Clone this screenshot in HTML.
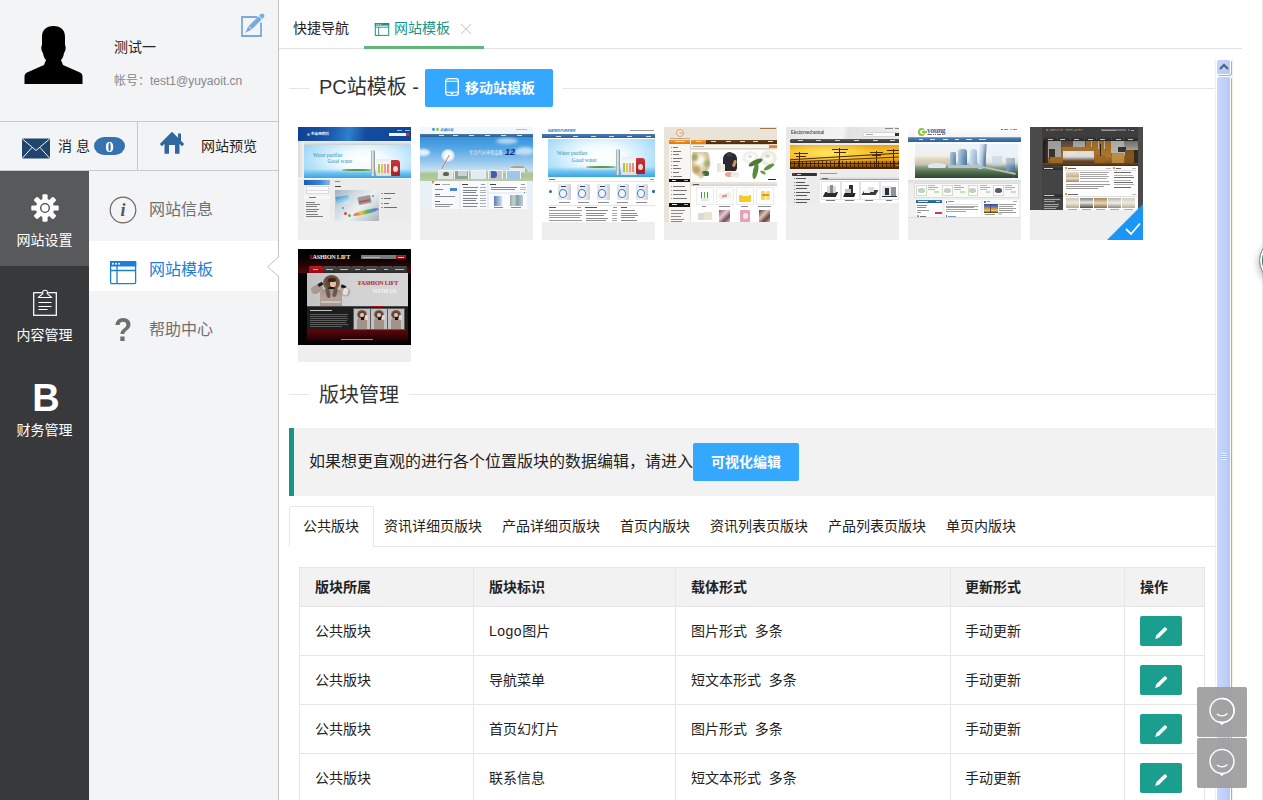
<!DOCTYPE html>
<html lang="zh-CN">
<head>
<meta charset="utf-8">
<title>网站模板</title>
<style>
*{box-sizing:border-box;margin:0;padding:0}
html,body{width:1263px;height:800px;overflow:hidden;background:#fff}
body{font-family:"Liberation Sans","Noto Sans CJK SC",sans-serif;font-size:14px;color:#333;position:relative}
.abs{position:absolute}
#side{position:absolute;left:0;top:0;width:278px;height:800px;background:#f3f4f6}
#sideborder{position:absolute;left:278px;top:0;width:1px;height:800px;background:#c3c3c3}
#dark{position:absolute;left:0;top:171px;width:89px;height:629px;background:#38393b}
#dark .act{position:absolute;left:0;top:0;width:89px;height:95px;background:#58595b}
.dl{position:absolute;left:0;width:89px;text-align:center;color:#fff;font-size:14px;line-height:20px}
.hl{position:absolute;background:#c9c9c9}
.t{position:absolute;white-space:nowrap;line-height:20px}
#main{position:absolute;left:279px;top:0;width:984px;height:800px;background:#fff;overflow:hidden}

.ln{position:absolute;height:1px;background:#e6e6e6}
.vl{position:absolute;width:1px;background:#e6e6e6}
.btn{position:absolute;background:#34a7ff;border-radius:2px;color:#fff;font-weight:bold;font-size:14px;line-height:38px;height:38px;white-space:nowrap}
.th{position:absolute;width:113px;height:113px;background:#eee;overflow:hidden}
.tab{position:absolute;top:506px;height:40px;line-height:40px;font-size:14px;color:#222;white-space:nowrap}
.c{position:absolute;white-space:nowrap;font-size:14px;line-height:20px;color:#222}
.hd{font-weight:bold}
.eb{position:absolute;left:861px;width:42px;height:30px;border-radius:2px;background:#1a9e8e}
</style>
</head>
<body>
<div id="side">
  <!-- avatar -->
  <svg class="abs" style="left:24px;top:25px" width="60" height="60" viewBox="0 0 60 60"><path d="M29.5 1 C22 1 18 5 18 12 L18 20 C17 21 17 26 19 28 C19.500 32 21 34 22 35 L20 40 L3 47.500 C1 48.500 0.500 50 0.500 52 L0.500 59 L58.500 59 L58.500 52 C58.500 50 58 48.500 56 47.500 L39 40 L37 35 C38 34 39.500 32 40 28 C42 26 42 21 41 20 L41 12 C41 5 37 1 29.500 1 Z" fill="#000"/></svg>
  <div class="t" style="left:114px;top:37px;font-size:14px;color:#222">测试一</div>
  <div class="t" style="left:114px;top:71px;font-size:12px;color:#888">帐号：test1@yuyaoit.cn</div>
  <!-- edit icon -->
  <svg class="abs" style="left:239px;top:11px" width="28" height="28" viewBox="0 0 28 28"><path d="M18.300 6 L3 6 L3 25 L22 25 L22 11.500" fill="none" stroke="#7aaade" stroke-width="1.800"/><path d="M10.800 17.200 L20.800 7.200" stroke="#7aaade" stroke-width="4.600" fill="none"/><path d="M9.200 15.600 L12.400 18.800 L6.300 21.700 Z" fill="#7aaade"/><path d="M22.200 5.800 L23.100 4.900" stroke="#7aaade" stroke-width="4.600" stroke-linecap="round" fill="none"/><path d="M19.800 4.800 L23.800 8.800 M9.400 15 L13 18.600" stroke="#f3f4f6" stroke-width="0.900" fill="none"/></svg>
  <div class="hl" style="left:0;top:121px;width:278px;height:1px"></div>
  <div class="hl" style="left:0;top:170px;width:278px;height:1px"></div>
  <div class="hl" style="left:137px;top:122px;width:1px;height:48px"></div>
  <!-- envelope -->
  <svg class="abs" style="left:22px;top:137.500px" width="28" height="21" viewBox="0 0 28 21"><rect x="0" y="0.500" width="28" height="20" rx="1" fill="#21466e"/><path d="M0.500 1 L14 12.500 L27.500 1 M0.500 20 L10 9.500 M27.500 20 L18 9.500" fill="none" stroke="#eef2f6" stroke-width="1"/></svg>
  <div class="t" style="left:58px;top:136px;font-size:14px;color:#222;letter-spacing:0">消 息</div>
  <div class="abs" style="left:96px;top:137px;width:27px;height:18px;border-radius:9px;background:#3572b0;color:#fff;font:bold 15px/20px 'Liberation Serif',serif;text-align:center;transform:scaleX(1.15)">0</div>
  <!-- home -->
  <svg class="abs" style="left:159px;top:131px" width="27" height="24" viewBox="0 0 27 24"><path d="M13 0.800 L19 6.800 L19 2.400 L22 2.400 L22 9.800 L25.200 13 L23 15.200 L20.500 12.700 L20.500 22.800 L16 22.800 L16 14.100 L10 14.100 L10 22.800 L5.500 22.800 L5.500 12.700 L3 15.200 L0.800 13 Z" fill="#2f67a0"/></svg>
  <div class="t" style="left:201px;top:136px;font-size:14px;color:#222">网站预览</div>

  <div id="dark">
    <div class="act"></div>
    <!-- gear -->
    <svg class="abs" style="left:30px;top:22px" width="30" height="30" viewBox="-15 -15 30 30"><g fill="#fff"><circle r="9.200"/><g id="teeth"><rect x="-2.600" y="-13.700" width="5.200" height="27.400" rx="1.200"/><rect x="-2.600" y="-13.700" width="5.200" height="27.400" rx="1.200" transform="rotate(45)"/><rect x="-2.600" y="-13.700" width="5.200" height="27.400" rx="1.200" transform="rotate(90)"/><rect x="-2.600" y="-13.700" width="5.200" height="27.400" rx="1.200" transform="rotate(135)"/></g></g><circle r="4.300" fill="none" stroke="#47484a" stroke-width="1.300"/></svg>
    <div class="dl" style="top:59px">网站设置</div>
    <!-- clipboard -->
    <svg class="abs" style="left:32px;top:117.700px" width="26" height="28" viewBox="0 0 26 28"><rect x="1.700" y="3.700" width="22.600" height="22.600" fill="none" stroke="#fff" stroke-width="1.250"/><path d="M6.300 8.500 L19.700 8.500 L15.200 4.600 Q15.900 1.200 13 1.200 Q10.100 1.200 10.800 4.600 Z" fill="#38393b" stroke="#fff" stroke-width="1.100" stroke-linejoin="round"/><path d="M6.500 13.500 H19.500 M6.500 17.500 H19.500 M6.500 20.500 H15.500" stroke="#fff" stroke-width="1.100" fill="none"/></svg>
    <div class="dl" style="top:154px">内容管理</div>
    <div class="abs" style="left:0;top:205px;width:92px;text-align:center;color:#fff;font:bold 38px/44px 'Liberation Sans',sans-serif">B</div>
    <div class="dl" style="top:249px">财务管理</div>
  </div>
  <!-- submenu -->
  <div class="abs" style="left:89px;top:241px;width:189px;height:50px;background:#fff"></div>
  <svg class="abs" style="left:108px;top:195px" width="30" height="30" viewBox="0 0 30 30"><circle cx="15" cy="15" r="12.800" fill="none" stroke="#6d6760" stroke-width="1.200"/><text x="15" y="21" text-anchor="middle" font-family="Liberation Serif,serif" font-style="italic" font-weight="bold" font-size="18" fill="#555">i</text></svg>
  <div class="t" style="left:149px;top:200px;font-size:16px;color:#707070">网站信息</div>
  <svg class="abs" style="left:109px;top:260px" width="28" height="25" viewBox="0 0 28 25"><rect x="1.600" y="1.600" width="25" height="22" rx="1" fill="#fff" stroke="#1b7fd9" stroke-width="1.300"/><rect x="1" y="1" width="26.200" height="5.500" fill="#1b7fd9"/><path d="M8 6 V23.500 M1.500 10.500 H26.500" stroke="#1b7fd9" stroke-width="1.300" fill="none"/><circle cx="4" cy="3.700" r="1" fill="#fff"/><circle cx="7" cy="3.700" r="1" fill="#fff"/><circle cx="10" cy="3.700" r="1" fill="#fff"/></svg>
  <div class="t" style="left:149px;top:260px;font-size:16px;color:#1b7fd9">网站模板</div>
  <div class="abs" style="left:108px;top:311px;width:30px;text-align:center;font:bold 33px/38px 'Liberation Sans',sans-serif;color:#6e6e6e;transform:scaleX(.9)">?</div>
  <div class="t" style="left:149px;top:320px;font-size:16px;color:#707070">帮助中心</div>
</div>
<div id="sideborder"></div>
<svg class="abs" style="left:262px;top:252px" width="18" height="32" viewBox="0 0 18 32"><path d="M17.500 5.200 L6 14.800 L17.500 24.400 Z" fill="#fff"/><rect x="16" y="5.700" width="2" height="18.200" fill="#fff"/><path d="M16.500 5.200 L5.500 14.800 L16.500 24.400" fill="none" stroke="#c3c3c3" stroke-width="1"/></svg>
<div id="main">
<div class="ln" style="left:0;top:48px;width:963px;background:#e2e2e2"></div>
<div class="t" style="left:14px;top:18px;font-size:14px;color:#222">快捷导航</div>
<svg class="abs" style="left:95px;top:22px" width="16" height="15" viewBox="0 0 16 15"><rect x="1.300" y="1.600" width="13.400" height="11.800" fill="none" stroke="#169587" stroke-width="1"/><rect x="0.800" y="1" width="14.400" height="2.600" fill="#169587"/><path d="M4.700 5 V13.500 M1 5.200 H15" stroke="#169587" stroke-width="0.900" fill="none"/><circle cx="2.800" cy="2.300" r=".5" fill="#fff"/><circle cx="4.600" cy="2.300" r=".5" fill="#fff"/><circle cx="6.400" cy="2.300" r=".5" fill="#fff"/></svg>
<div class="t" style="left:115px;top:18px;font-size:14px;color:#169587">网站模板</div>
<svg class="abs" style="left:181px;top:23px" width="12" height="12" viewBox="0 0 12 12"><path d="M1 1 L11 11 M11 1 L1 11" stroke="#c9c9c1" stroke-width="1.050" fill="none"/></svg>
<div class="abs" style="left:85px;top:46px;width:120px;height:3px;background:#5fb878"></div>
<div class="ln" style="left:10px;top:88px;width:20px"></div>
<div class="ln" style="left:284px;top:88px;width:652px"></div>
<div class="t" style="left:40px;top:72px;font-size:20px;line-height:30px;color:#333">PC站模板 -</div>
<div class="btn" style="left:146px;top:69px;width:128px"><svg class="abs" style="left:20px;top:9px" width="14" height="18" viewBox="0 0 14 18"><rect x="0.700" y="0.700" width="12.600" height="16.600" rx="2.200" fill="none" stroke="#fff" stroke-width="1.300"/><path d="M0.700 3.200 H13.300 M0.700 14.300 H13.300" stroke="#fff" stroke-width="1.100"/><rect x="5.800" y="15" width="2.400" height="1.300" fill="#fff"/></svg><span style="position:absolute;left:40px;top:0">移动站模板</span></div>
<div class="th" id="th1" style="left:19px;top:127px"><div style="position:absolute;left:0px;top:0px;width:113px;height:94px;background:#ececec;"></div><div style="position:absolute;left:0px;top:0px;width:113px;height:14px;background:linear-gradient(100deg,#0e3f90 0%,#1a5cb0 30%,#2f7fcd 45%,#134c9f 60%,#0f4596 100%);"></div><div style="position:absolute;left:13px;top:4.8px;font-size:3.6px;line-height:4.6px;color:#e6eef8;white-space:nowrap;"><b>东莱网络科</b></div><div style="position:absolute;left:8.5px;top:5.5px;width:3.8px;height:3.8px;background:#7dbb8a;border-radius:50%"></div><div style="position:absolute;left:91px;top:6.3px;width:17px;height:2.5px;background:#f4f4f4;"></div><div style="position:absolute;left:99px;top:3.3px;width:5px;height:0.8px;background:#9db9dd;"></div><div style="position:absolute;left:107px;top:3.3px;width:5px;height:0.8px;background:#9db9dd;"></div><div style="position:absolute;left:108px;top:6.3px;width:3px;height:2.5px;background:#c0392b;"></div><div style="position:absolute;left:0px;top:14px;width:113px;height:36px;background:linear-gradient(90deg,#d9d9d9,#f1f1f1 5%,#e4e4e4);"></div><div style="position:absolute;left:6px;top:14px;width:107px;height:3.5px;background:linear-gradient(180deg,#f2f2f2,#cfcfcf);"></div><div style="position:absolute;left:6px;top:17.5px;width:107px;height:33px;background:radial-gradient(ellipse 60% 80% at 55% 45%,#ffffff 0%,#f3fbff 35%,#c6e9fb 70%,#9fd8f6 100%);"></div><div style="position:absolute;left:6px;top:42px;width:107px;height:8.5px;background:linear-gradient(180deg,rgba(120,200,245,0) 0%,#6cc3f0 45%,#3aa3e4 100%);"></div><div style="position:absolute;left:44px;top:41.5px;width:30px;height:2.2px;background:#5c9a48;border-radius:50%;filter:blur(.4px)"></div><div style="position:absolute;left:15px;top:25px;font-size:5.3px;line-height:6.3px;color:#2590b8;white-space:nowrap;font-family:'Liberation Serif',serif">Water purifier</div><div style="position:absolute;left:29.5px;top:31.3px;font-size:5.3px;line-height:6.3px;color:#2590b8;white-space:nowrap;font-family:'Liberation Serif',serif">Good water</div><div style="position:absolute;left:73px;top:23px;width:3.5px;height:26px;background:linear-gradient(90deg,#8e9aa5,#eef2f5 45%,#76828e);border-radius:1.500px 1.500px 0 0"></div><div style="position:absolute;left:77.5px;top:31.5px;width:16px;height:17.5px;background:linear-gradient(180deg,#e9ecef,#f8f9fa 30%,#d9dde1);border-radius:1px"></div><div style="position:absolute;left:79.5px;top:37px;width:2.2px;height:9px;background:#a9c84e;"></div><div style="position:absolute;left:82.7px;top:37px;width:2.2px;height:9px;background:#e9c64a;"></div><div style="position:absolute;left:85.9px;top:37px;width:2.2px;height:9px;background:#e79bb0;"></div><div style="position:absolute;left:89.1px;top:37px;width:2.2px;height:9px;background:#ef9450;"></div><div style="position:absolute;left:93px;top:32.5px;width:9px;height:16px;background:linear-gradient(180deg,#c7353a,#a81f27);border-radius:1px 3px 1px 1px"></div><div style="position:absolute;left:94.5px;top:38.5px;width:5px;height:6px;background:#e8d7d7;border-radius:50%"></div><div style="position:absolute;left:0px;top:50.5px;width:113px;height:0.8px;background:#f8f8f8;"></div><div style="position:absolute;left:6px;top:53px;width:26px;height:4.5px;background:linear-gradient(90deg,#1a5cb8,#3b82d6 60%,#8eb9ea);"></div><div style="position:absolute;left:6px;top:57.5px;width:26px;height:36px;background:#f1f1f1;"></div><div style="position:absolute;left:9px;top:60px;width:21px;height:2.5px;background:#fbfbfb;outline:0.3px solid #dcdcdc"></div><div style="position:absolute;left:9px;top:63.5px;width:21px;height:2.5px;background:#fbfbfb;outline:0.3px solid #dcdcdc"></div><div style="position:absolute;left:6px;top:68.5px;width:26px;height:3.5px;background:#f7f7f7;"></div><div style="position:absolute;left:8px;top:74.5px;width:9px;height:1px;background:#7d7d7d;"></div><div style="position:absolute;left:8px;top:76.95px;width:14px;height:1px;background:#7d7d7d;"></div><div style="position:absolute;left:8px;top:79.4px;width:11px;height:1px;background:#7d7d7d;"></div><div style="position:absolute;left:8px;top:81.85px;width:13px;height:1px;background:#7d7d7d;"></div><div style="position:absolute;left:8px;top:84.3px;width:11px;height:1px;background:#7d7d7d;"></div><div style="position:absolute;left:8px;top:86.75px;width:12px;height:1px;background:#7d7d7d;"></div><div style="position:absolute;left:8px;top:89.2px;width:17px;height:1px;background:#7d7d7d;"></div><div style="position:absolute;left:11px;top:70px;width:7px;height:1px;background:#777;"></div><div style="position:absolute;left:37px;top:53.5px;width:5px;height:1px;background:#8a8a8a;"></div><div style="position:absolute;left:36.5px;top:59px;width:6.5px;height:1.4px;background:#444;"></div><div style="position:absolute;left:37px;top:63px;width:43.5px;height:31px;background:linear-gradient(135deg,#9fb2bf 0%,#cfd9df 30%,#eef1f3 55%,#c9d1d6 80%,#a7b1b8 100%);"></div><div style="position:absolute;left:37.5px;top:69px;width:13px;height:8px;background:linear-gradient(160deg,#3f8fcb,#9fd0ea 60%,#e9f4f9);transform:rotate(-8deg)"></div><div style="position:absolute;left:60px;top:68.5px;width:13px;height:7.5px;background:#9b9b9b;transform:rotate(-12deg);border-radius:1px"></div><div style="position:absolute;left:61px;top:73px;width:11px;height:2px;background:#c94b4b;transform:rotate(-12deg)"></div><div style="position:absolute;left:55px;top:83px;width:26px;height:4px;background:linear-gradient(90deg,#d9413b,#e8c43a 30%,#62b257 55%,#3f8ed0 80%,#7f57b0);border-radius:50%;transform:rotate(-14deg);filter:blur(.5px)"></div><div style="position:absolute;left:46px;top:84.5px;width:3px;height:3px;background:#e0483f;border-radius:50%"></div><div style="position:absolute;left:50px;top:87px;width:3px;height:3px;background:#5fb14e;border-radius:50%"></div><div style="position:absolute;left:44px;top:80px;width:2px;height:2px;background:#3b9ad8;border-radius:50%"></div><div style="position:absolute;left:74px;top:68px;width:1.5px;height:1.5px;background:#3aa3e4;border-radius:50%"></div><div style="position:absolute;left:83px;top:66.0px;width:2px;height:1px;background:#999;"></div><div style="position:absolute;left:86px;top:66.0px;width:11px;height:1px;background:#6e6e6e;"></div><div style="position:absolute;left:83px;top:70.8px;width:2px;height:1px;background:#999;"></div><div style="position:absolute;left:86px;top:70.8px;width:7px;height:1px;background:#6e6e6e;"></div><div style="position:absolute;left:83px;top:75.6px;width:2px;height:1px;background:#999;"></div><div style="position:absolute;left:86px;top:75.6px;width:5px;height:1px;background:#6e6e6e;"></div><div style="position:absolute;left:83px;top:80.4px;width:2px;height:1px;background:#999;"></div><div style="position:absolute;left:86px;top:80.4px;width:13px;height:1px;background:#6e6e6e;"></div></div><!--e1-->
<div class="th" id="th2" style="left:141px;top:127px"><div style="position:absolute;left:0px;top:0px;width:113px;height:82px;background:#eaf0f8;"></div><div style="position:absolute;left:0px;top:0px;width:113px;height:6.5px;background:#f3f6fb;"></div><div style="position:absolute;left:12px;top:1.3px;width:3px;height:2.8px;background:#3d9ad6;border-radius:50%"></div><div style="position:absolute;left:15.5px;top:1.3px;width:3px;height:2.8px;background:#8cc63f;border-radius:50%"></div><div style="position:absolute;left:20px;top:0.8px;font-size:3.3px;line-height:4.3px;color:#2a7fc4;white-space:nowrap;"><b><i>华通科技</i></b></div><div style="position:absolute;left:96px;top:2px;width:11px;height:0.9px;background:#b8bcc2;"></div><div style="position:absolute;left:0px;top:6.5px;width:113px;height:3.8px;background:linear-gradient(180deg,#4a7aa8,#2f5f8e);"></div><div style="position:absolute;left:19px;top:8px;width:5px;height:0.9px;background:#d6e2ee;"></div><div style="position:absolute;left:33px;top:8px;width:5px;height:0.9px;background:#d6e2ee;"></div><div style="position:absolute;left:49px;top:8px;width:5px;height:0.9px;background:#d6e2ee;"></div><div style="position:absolute;left:65px;top:8px;width:5px;height:0.9px;background:#d6e2ee;"></div><div style="position:absolute;left:81px;top:8px;width:5px;height:0.9px;background:#d6e2ee;"></div><div style="position:absolute;left:97px;top:8px;width:5px;height:0.9px;background:#d6e2ee;"></div><div style="position:absolute;left:0px;top:10.3px;width:113px;height:42.7px;background:linear-gradient(180deg,#3590dc 0%,#5aaae6 30%,#9ccbee 60%,#cfe4f1 80%,#c3d8c4 100%);"></div><div style="position:absolute;left:-4px;top:22px;width:14px;height:7px;background:#f2f8fc;border-radius:50%;filter:blur(1.2px);opacity:.9"></div><div style="position:absolute;left:76px;top:11px;width:22px;height:6px;background:#e4f1fa;border-radius:50%;filter:blur(1.5px);opacity:.7"></div><div style="position:absolute;left:96px;top:20px;width:18px;height:8px;background:#eaf4fb;border-radius:50%;filter:blur(1.5px);opacity:.7"></div><div style="position:absolute;left:20.5px;top:21.5px;width:14px;height:13px;background:radial-gradient(circle,#ffffff 0%,#eef6fc 45%,rgba(230,242,250,.3) 75%,rgba(230,242,250,0) 100%);border-radius:50%"></div><div style="position:absolute;left:29px;top:28px;width:1.1px;height:16px;background:linear-gradient(90deg,#b0493f,#e9d9d9);transform:rotate(28deg);transform-origin:top center"></div><div style="position:absolute;left:0px;top:43px;width:113px;height:10px;background:linear-gradient(180deg,rgba(170,200,150,0),#a9c593 40%,#b7caa2 100%);"></div><div style="position:absolute;left:49px;top:23.3px;font-size:4.2px;line-height:5.2px;color:#eef5fa;white-space:nowrap;">专注汽水环保设备</div><div style="position:absolute;left:85px;top:19.5px;font-size:9px;line-height:10px;color:#1d2a7a;white-space:nowrap;font-family:'Liberation Sans',sans-serif"><b><i>12</i></b></div><div style="position:absolute;left:95.5px;top:23.3px;font-size:4.2px;line-height:5.2px;color:#eef5fa;white-space:nowrap;">年</div><div style="position:absolute;left:86px;top:38.5px;width:22px;height:6px;background:#a8a692;clip-path:polygon(0 100%,25% 20%,50% 0,80% 15%,100% 100%);filter:blur(.5px)"></div><div style="position:absolute;left:89px;top:41px;width:16px;height:4px;background:#e6ebe8;filter:blur(.4px)"></div><div style="position:absolute;left:19px;top:43.5px;width:13px;height:8px;background:#dfe6e4;outline:0.3px solid #eef3f5"></div><div style="position:absolute;left:35px;top:43.5px;width:13px;height:8px;background:#8fa59a;outline:0.3px solid #eef3f5"></div><div style="position:absolute;left:52px;top:43.5px;width:13px;height:8px;background:#e1ebf2;outline:0.3px solid #eef3f5"></div><div style="position:absolute;left:69px;top:43.5px;width:13px;height:8px;background:#c9c0c8;outline:0.3px solid #eef3f5"></div><div style="position:absolute;left:87px;top:43.5px;width:13px;height:8px;background:#9cc7e8;outline:0.3px solid #eef3f5"></div><div style="position:absolute;left:23px;top:45px;width:6px;height:4px;background:#5b6058;border-radius:40%"></div><div style="position:absolute;left:38px;top:44px;width:9px;height:5px;background:#c9d3d2;"></div><div style="position:absolute;left:71px;top:43.5px;width:6px;height:7px;background:#3d5fb2;border-radius:0 50% 50% 0"></div><div style="position:absolute;left:0px;top:51.5px;width:113px;height:2px;background:#b9cca8;filter:blur(.5px)"></div><div style="position:absolute;left:12px;top:53.5px;width:27px;height:28.5px;background:#f7f9fc;"></div><div style="position:absolute;left:40.5px;top:53.5px;width:26.5px;height:28.5px;background:#f7f9fc;"></div><div style="position:absolute;left:68.5px;top:53.5px;width:38px;height:11px;background:#f9fbfd;"></div><div style="position:absolute;left:68.5px;top:66.5px;width:38px;height:15.5px;background:#f9fbfd;"></div><div style="position:absolute;left:12px;top:53.5px;width:3.5px;height:3.5px;background:#ef8a2a;clip-path:polygon(0 0,100% 0,0 100%)"></div><div style="position:absolute;left:14.5px;top:57px;width:5.5px;height:1.2px;background:#444;"></div><div style="position:absolute;left:22px;top:57.3px;width:8px;height:0.7px;background:#aaa;"></div><div style="position:absolute;left:15px;top:61.5px;width:8px;height:1px;background:#888;"></div><div style="position:absolute;left:30px;top:60.5px;width:7px;height:3.2px;background:#4d86c6;"></div><div style="position:absolute;left:14.5px;top:66.5px;width:5px;height:1px;background:#666;"></div><div style="position:absolute;left:14.5px;top:69.2px;width:20px;height:0.9px;background:#8c8c8c;"></div><div style="position:absolute;left:14.5px;top:74px;width:5px;height:1px;background:#666;"></div><div style="position:absolute;left:14.5px;top:76.5px;width:18px;height:0.9px;background:#8c8c8c;"></div><div style="position:absolute;left:15px;top:78.8px;width:15px;height:0.9px;background:#999;"></div><div style="position:absolute;left:42px;top:56.5px;width:5.5px;height:1.2px;background:#444;"></div><div style="position:absolute;left:61px;top:56.8px;width:4px;height:0.8px;background:#999;"></div><div style="position:absolute;left:42.5px;top:60.0px;width:15px;height:0.9px;background:#7f858c;"></div><div style="position:absolute;left:59.5px;top:60.0px;width:6px;height:0.9px;background:#aab0b6;"></div><div style="position:absolute;left:42.5px;top:62.65px;width:14px;height:0.9px;background:#7f858c;"></div><div style="position:absolute;left:59.5px;top:62.65px;width:6px;height:0.9px;background:#aab0b6;"></div><div style="position:absolute;left:42.5px;top:65.3px;width:13px;height:0.9px;background:#7f858c;"></div><div style="position:absolute;left:59.5px;top:65.3px;width:6px;height:0.9px;background:#aab0b6;"></div><div style="position:absolute;left:42.5px;top:67.95px;width:15px;height:0.9px;background:#7f858c;"></div><div style="position:absolute;left:59.5px;top:67.95px;width:6px;height:0.9px;background:#aab0b6;"></div><div style="position:absolute;left:42.5px;top:70.6px;width:14px;height:0.9px;background:#7f858c;"></div><div style="position:absolute;left:59.5px;top:70.6px;width:6px;height:0.9px;background:#aab0b6;"></div><div style="position:absolute;left:42.5px;top:73.25px;width:13px;height:0.9px;background:#7f858c;"></div><div style="position:absolute;left:59.5px;top:73.25px;width:6px;height:0.9px;background:#aab0b6;"></div><div style="position:absolute;left:42.5px;top:75.9px;width:15px;height:0.9px;background:#7f858c;"></div><div style="position:absolute;left:59.5px;top:75.9px;width:6px;height:0.9px;background:#aab0b6;"></div><div style="position:absolute;left:42.5px;top:78.55px;width:14px;height:0.9px;background:#7f858c;"></div><div style="position:absolute;left:59.5px;top:78.55px;width:6px;height:0.9px;background:#aab0b6;"></div><div style="position:absolute;left:70px;top:56.5px;width:5.5px;height:1.2px;background:#444;"></div><div style="position:absolute;left:101px;top:56.8px;width:4px;height:0.8px;background:#999;"></div><div style="position:absolute;left:71px;top:60px;width:26px;height:0.9px;background:#7f858c;"></div><div style="position:absolute;left:71px;top:62.3px;width:24px;height:0.9px;background:#8a9097;"></div><div style="position:absolute;left:100px;top:60px;width:5.5px;height:0.9px;background:#b3b8bd;"></div><div style="position:absolute;left:100px;top:62.3px;width:5.5px;height:0.9px;background:#b3b8bd;"></div><div style="position:absolute;left:104px;top:65px;width:1px;height:1px;background:#3a7cc4;"></div><div style="position:absolute;left:74px;top:68.5px;width:8px;height:10.5px;background:linear-gradient(90deg,#5a7fb8,#9fb4d6 55%,#d8dde6);"></div><div style="position:absolute;left:89.5px;top:67.5px;width:13px;height:11.5px;background:linear-gradient(90deg,#9aa7a8,#c9d4d4 30%,#7fa0b3 55%,#c4cfce);"></div><div style="position:absolute;left:74px;top:80.3px;width:9px;height:0.8px;background:#8b8b8b;"></div><div style="position:absolute;left:91px;top:80.3px;width:10px;height:0.8px;background:#8b8b8b;"></div></div><!--e2-->
<div class="th" id="th3" style="left:263px;top:127px"><div style="position:absolute;left:0px;top:0px;width:113px;height:95px;background:#ffffff;"></div><div style="position:absolute;left:6px;top:1.5px;font-size:3.4px;line-height:4.4px;color:#2a6fc0;white-space:nowrap;font-family:'Liberation Sans',sans-serif;letter-spacing:-.1px"><b><i>WATER PURIFIER</i></b></div><div style="position:absolute;left:88px;top:3.3px;width:24px;height:0.9px;background:#9a9a9a;"></div><div style="position:absolute;left:0px;top:7.3px;width:113px;height:3.7px;background:linear-gradient(180deg,#4a7db3,#2f6199);"></div><div style="position:absolute;left:14px;top:8.7px;width:5px;height:0.9px;background:#d3e0ee;"></div><div style="position:absolute;left:31px;top:8.7px;width:5px;height:0.9px;background:#d3e0ee;"></div><div style="position:absolute;left:49px;top:8.7px;width:5px;height:0.9px;background:#d3e0ee;"></div><div style="position:absolute;left:67px;top:8.7px;width:5px;height:0.9px;background:#d3e0ee;"></div><div style="position:absolute;left:85px;top:8.7px;width:5px;height:0.9px;background:#d3e0ee;"></div><div style="position:absolute;left:104px;top:8.7px;width:5px;height:0.9px;background:#d3e0ee;"></div><div style="position:absolute;left:6px;top:12.3px;width:107px;height:38px;background:radial-gradient(ellipse 60% 80% at 50% 45%,#ffffff 0%,#f3fbff 35%,#c6e9fb 70%,#9fd8f6 100%);"></div><div style="position:absolute;left:6px;top:40px;width:107px;height:10.3px;background:linear-gradient(180deg,rgba(120,200,245,0) 0%,#6cc3f0 45%,#3aa3e4 100%);"></div><div style="position:absolute;left:44px;top:38.5px;width:30px;height:2.2px;background:#5c9a48;border-radius:50%;filter:blur(.4px)"></div><div style="position:absolute;left:15px;top:23px;font-size:5.4px;line-height:6.4px;color:#2590b8;white-space:nowrap;font-family:'Liberation Serif',serif">Water purifier</div><div style="position:absolute;left:0px;top:0px;width:0px;height:0px;background:none;"></div><div style="position:absolute;left:29.5px;top:29.7px;font-size:5.4px;line-height:6.4px;color:#2590b8;white-space:nowrap;font-family:'Liberation Serif',serif">Good water</div><div style="position:absolute;left:74px;top:21.5px;width:4px;height:26px;background:linear-gradient(90deg,#8e9aa5,#eef2f5 45%,#76828e);border-radius:1.500px 1.500px 0 0"></div><div style="position:absolute;left:78.5px;top:30px;width:16px;height:17.5px;background:linear-gradient(180deg,#e9ecef,#f8f9fa 30%,#d9dde1);border-radius:1px"></div><div style="position:absolute;left:80.5px;top:35.5px;width:2.2px;height:9px;background:#a9c84e;"></div><div style="position:absolute;left:83.7px;top:35.5px;width:2.2px;height:9px;background:#e9c64a;"></div><div style="position:absolute;left:86.9px;top:35.5px;width:2.2px;height:9px;background:#e79bb0;"></div><div style="position:absolute;left:90.1px;top:35.5px;width:2.2px;height:9px;background:#ef9450;"></div><div style="position:absolute;left:94px;top:31px;width:9px;height:16px;background:linear-gradient(180deg,#c7353a,#a81f27);border-radius:1px 3px 1px 1px"></div><div style="position:absolute;left:95.5px;top:37px;width:5px;height:6px;background:#e8d7d7;border-radius:50%"></div><div style="position:absolute;left:7px;top:52px;width:6px;height:1px;background:#777;"></div><div style="position:absolute;left:108px;top:52px;width:4px;height:1px;background:#999;"></div><div style="position:absolute;left:6px;top:54.3px;width:107px;height:0.5px;background:#e4e4e4;"></div><div style="position:absolute;left:6px;top:78.3px;width:107px;height:0.5px;background:#e4e4e4;"></div><div style="position:absolute;left:16px;top:57px;width:12.5px;height:16px;background:linear-gradient(90deg,#dfe3e8,#f4f6f8 45%,#c9cfd6);border-radius:1.500px"></div><div style="position:absolute;left:17.2px;top:61.5px;width:8px;height:9px;background:#f3f5f7;border-radius:50%;border:1px solid #4a7fc4"></div><div style="position:absolute;left:19px;top:58.7px;width:5px;height:1px;background:#2c3e6b;"></div><div style="position:absolute;left:16.5px;top:74.5px;width:11px;height:0.9px;background:#8d8d8d;"></div><div style="position:absolute;left:35px;top:57px;width:12.5px;height:16px;background:linear-gradient(90deg,#dfe3e8,#f4f6f8 45%,#c9cfd6);border-radius:1.500px"></div><div style="position:absolute;left:36.2px;top:61.5px;width:8px;height:9px;background:#f3f5f7;border-radius:50%;border:1px solid #4a7fc4"></div><div style="position:absolute;left:38px;top:58.7px;width:5px;height:1px;background:#2c3e6b;"></div><div style="position:absolute;left:35.5px;top:74.5px;width:11px;height:0.9px;background:#8d8d8d;"></div><div style="position:absolute;left:55px;top:57px;width:12.5px;height:16px;background:linear-gradient(90deg,#dfe3e8,#f4f6f8 45%,#c9cfd6);border-radius:1.500px"></div><div style="position:absolute;left:56.2px;top:61.5px;width:8px;height:9px;background:#f3f5f7;border-radius:50%;border:1px solid #4a7fc4"></div><div style="position:absolute;left:58px;top:58.7px;width:5px;height:1px;background:#2c3e6b;"></div><div style="position:absolute;left:55.5px;top:74.5px;width:11px;height:0.9px;background:#8d8d8d;"></div><div style="position:absolute;left:74.5px;top:57px;width:12.5px;height:16px;background:linear-gradient(90deg,#dfe3e8,#f4f6f8 45%,#c9cfd6);border-radius:1.500px"></div><div style="position:absolute;left:75.7px;top:61.5px;width:8px;height:9px;background:#f3f5f7;border-radius:50%;border:1px solid #4a7fc4"></div><div style="position:absolute;left:77.5px;top:58.7px;width:5px;height:1px;background:#2c3e6b;"></div><div style="position:absolute;left:75.0px;top:74.5px;width:11px;height:0.9px;background:#8d8d8d;"></div><div style="position:absolute;left:93.5px;top:57px;width:12.5px;height:16px;background:linear-gradient(90deg,#dfe3e8,#f4f6f8 45%,#c9cfd6);border-radius:1.500px"></div><div style="position:absolute;left:94.7px;top:61.5px;width:8px;height:9px;background:#f3f5f7;border-radius:50%;border:1px solid #4a7fc4"></div><div style="position:absolute;left:96.5px;top:58.7px;width:5px;height:1px;background:#2c3e6b;"></div><div style="position:absolute;left:94.0px;top:74.5px;width:11px;height:0.9px;background:#8d8d8d;"></div><div style="position:absolute;left:7px;top:62.5px;width:3px;height:3.5px;background:#2e6fb7;border-radius:50%"></div><div style="position:absolute;left:109.5px;top:62.5px;width:3px;height:3.5px;background:#2e6fb7;border-radius:1px"></div><div style="position:absolute;left:7px;top:80.2px;width:7px;height:1.1px;background:#555;"></div><div style="position:absolute;left:35px;top:80.3px;width:4px;height:0.9px;background:#999;"></div><div style="position:absolute;left:43px;top:80.2px;width:12px;height:1.1px;background:#555;"></div><div style="position:absolute;left:71px;top:80.3px;width:4px;height:0.9px;background:#999;"></div><div style="position:absolute;left:79px;top:80.2px;width:6px;height:1.1px;background:#555;"></div><div style="position:absolute;left:7px;top:83.2px;width:33px;height:0.9px;background:#9a9a9a;"></div><div style="position:absolute;left:43.5px;top:83.2px;width:22px;height:0.9px;background:#8c8c8c;"></div><div style="position:absolute;left:70px;top:83.2px;width:5px;height:0.9px;background:#aaa;"></div><div style="position:absolute;left:79px;top:83.2px;width:14.0px;height:0.9px;background:#8a8a8a;"></div><div style="position:absolute;left:7px;top:85.55px;width:31px;height:0.9px;background:#9a9a9a;"></div><div style="position:absolute;left:43.5px;top:85.75px;width:20px;height:0.9px;background:#8c8c8c;"></div><div style="position:absolute;left:70px;top:85.75px;width:5px;height:0.9px;background:#aaa;"></div><div style="position:absolute;left:79px;top:85.55px;width:15.5px;height:0.9px;background:#8a8a8a;"></div><div style="position:absolute;left:7px;top:87.9px;width:33px;height:0.9px;background:#9a9a9a;"></div><div style="position:absolute;left:43.5px;top:88.3px;width:18px;height:0.9px;background:#8c8c8c;"></div><div style="position:absolute;left:70px;top:88.3px;width:5px;height:0.9px;background:#aaa;"></div><div style="position:absolute;left:79px;top:87.9px;width:17.0px;height:0.9px;background:#8a8a8a;"></div><div style="position:absolute;left:7px;top:90.25px;width:31px;height:0.9px;background:#9a9a9a;"></div><div style="position:absolute;left:43.5px;top:90.85000000000001px;width:22px;height:0.9px;background:#8c8c8c;"></div><div style="position:absolute;left:70px;top:90.85000000000001px;width:5px;height:0.9px;background:#aaa;"></div><div style="position:absolute;left:79px;top:90.25px;width:14.0px;height:0.9px;background:#8a8a8a;"></div><div style="position:absolute;left:7px;top:92.60000000000001px;width:33px;height:0.9px;background:#9a9a9a;"></div><div style="position:absolute;left:43.5px;top:93.4px;width:20px;height:0.9px;background:#8c8c8c;"></div><div style="position:absolute;left:70px;top:93.4px;width:5px;height:0.9px;background:#aaa;"></div><div style="position:absolute;left:79px;top:92.60000000000001px;width:15.5px;height:0.9px;background:#8a8a8a;"></div></div><!--e3-->
<div class="th" id="th4" style="left:385px;top:127px"><div style="position:absolute;left:0px;top:0px;width:113px;height:95px;background:#e9e4d7;"></div><div style="position:absolute;left:0px;top:0px;width:113px;height:95px;background:radial-gradient(circle,#d8d1c0 0.35px,rgba(0,0,0,0) 0.5px);background-size:2px 2px;opacity:.8"></div><div style="position:absolute;left:12px;top:1.5px;width:8px;height:8px;background:#f3e9dc;border-radius:50%;border:0.6px solid #d9a66b"></div><div style="position:absolute;left:14.5px;top:4.5px;width:4px;height:2.5px;background:#e7b9a8;border-radius:50%"></div><div style="position:absolute;left:6px;top:11px;width:20px;height:0.8px;background:#b9ad97;"></div><div style="position:absolute;left:96px;top:1.2px;width:16px;height:1px;background:#a0764f;"></div><div style="position:absolute;left:5px;top:13px;width:21px;height:3.7px;background:linear-gradient(180deg,#f59a2f,#e8740f);"></div><div style="position:absolute;left:10.5px;top:14.3px;width:10px;height:1px;background:#fde6c8;"></div><div style="position:absolute;left:27px;top:13px;width:86px;height:3.7px;background:linear-gradient(180deg,#6b431f,#4a2b10);"></div><div style="position:absolute;left:27px;top:13px;width:15px;height:3.7px;background:linear-gradient(180deg,#f59a2f,#e8740f);"></div><div style="position:absolute;left:32px;top:14.4px;width:5px;height:0.9px;background:#e9d9c4;"></div><div style="position:absolute;left:47px;top:14.4px;width:5px;height:0.9px;background:#e9d9c4;"></div><div style="position:absolute;left:62px;top:14.4px;width:5px;height:0.9px;background:#e9d9c4;"></div><div style="position:absolute;left:76px;top:14.4px;width:5px;height:0.9px;background:#e9d9c4;"></div><div style="position:absolute;left:89px;top:14.4px;width:5px;height:0.9px;background:#e9d9c4;"></div><div style="position:absolute;left:104px;top:14.4px;width:5px;height:0.9px;background:#e9d9c4;"></div><div style="position:absolute;left:5px;top:17px;width:21px;height:78px;background:#f7f6f2;"></div><div style="position:absolute;left:7px;top:20.3px;width:1px;height:1px;background:#9a9a9a;"></div><div style="position:absolute;left:9px;top:20.3px;width:5px;height:1px;background:#777;"></div><div style="position:absolute;left:7px;top:23.830000000000002px;width:1px;height:1px;background:#9a9a9a;"></div><div style="position:absolute;left:9px;top:23.830000000000002px;width:8px;height:1px;background:#777;"></div><div style="position:absolute;left:7px;top:27.36px;width:1px;height:1px;background:#9a9a9a;"></div><div style="position:absolute;left:9px;top:27.36px;width:6px;height:1px;background:#777;"></div><div style="position:absolute;left:7px;top:30.89px;width:1px;height:1px;background:#9a9a9a;"></div><div style="position:absolute;left:9px;top:30.89px;width:9px;height:1px;background:#777;"></div><div style="position:absolute;left:7px;top:34.42px;width:1px;height:1px;background:#9a9a9a;"></div><div style="position:absolute;left:9px;top:34.42px;width:7px;height:1px;background:#777;"></div><div style="position:absolute;left:7px;top:37.95px;width:1px;height:1px;background:#9a9a9a;"></div><div style="position:absolute;left:9px;top:37.95px;width:5px;height:1px;background:#777;"></div><div style="position:absolute;left:7px;top:41.480000000000004px;width:1px;height:1px;background:#9a9a9a;"></div><div style="position:absolute;left:9px;top:41.480000000000004px;width:8px;height:1px;background:#777;"></div><div style="position:absolute;left:7px;top:45.01px;width:1px;height:1px;background:#9a9a9a;"></div><div style="position:absolute;left:9px;top:45.01px;width:6px;height:1px;background:#777;"></div><div style="position:absolute;left:7px;top:48.54px;width:1px;height:1px;background:#9a9a9a;"></div><div style="position:absolute;left:9px;top:48.54px;width:9px;height:1px;background:#777;"></div><div style="position:absolute;left:5px;top:51.5px;width:21px;height:3.8px;background:#141414;"></div><div style="position:absolute;left:7.5px;top:52.9px;width:4px;height:1px;background:#eee;"></div><div style="position:absolute;left:20px;top:52.9px;width:3.5px;height:1px;background:#bbb;"></div><div style="position:absolute;left:7px;top:58.5px;width:1px;height:1px;background:#999;"></div><div style="position:absolute;left:9px;top:58.5px;width:12.0px;height:1px;background:#777;"></div><div style="position:absolute;left:7px;top:62.8px;width:1px;height:1px;background:#999;"></div><div style="position:absolute;left:9px;top:62.8px;width:13.5px;height:1px;background:#777;"></div><div style="position:absolute;left:7px;top:67.1px;width:1px;height:1px;background:#999;"></div><div style="position:absolute;left:9px;top:67.1px;width:12.0px;height:1px;background:#777;"></div><div style="position:absolute;left:7px;top:71.4px;width:1px;height:1px;background:#999;"></div><div style="position:absolute;left:9px;top:71.4px;width:13.5px;height:1px;background:#777;"></div><div style="position:absolute;left:5px;top:76px;width:21px;height:3.8px;background:#141414;"></div><div style="position:absolute;left:7.5px;top:77.4px;width:5px;height:1px;background:#eee;"></div><div style="position:absolute;left:20px;top:77.4px;width:3.5px;height:1px;background:#bbb;"></div><div style="position:absolute;left:6.5px;top:82.8px;width:14px;height:1px;background:#8a8a8a;"></div><div style="position:absolute;left:6.5px;top:85.7px;width:12px;height:1px;background:#8a8a8a;"></div><div style="position:absolute;left:6.5px;top:88.6px;width:10px;height:1px;background:#8a8a8a;"></div><div style="position:absolute;left:6.5px;top:91.5px;width:13px;height:1px;background:#8a8a8a;"></div><div style="position:absolute;left:6.5px;top:94.39999999999999px;width:11px;height:1px;background:#8a8a8a;"></div><div style="position:absolute;left:27px;top:18px;width:78px;height:3.2px;background:#f6f4ee;outline:0.3px solid #d9d3c4"></div><div style="position:absolute;left:29px;top:19.2px;width:11px;height:0.9px;background:#aaa;"></div><div style="position:absolute;left:105px;top:18px;width:8px;height:3.2px;background:linear-gradient(180deg,#f59a2f,#e8740f);"></div><div style="position:absolute;left:27px;top:22.5px;width:86px;height:32px;background:#ffffff;"></div><div style="position:absolute;left:28px;top:25px;width:18px;height:24px;background:radial-gradient(ellipse at 45% 40%,#f6f0e2 0%,#e9dcc0 35%,#cdbf98 60%,rgba(255,255,255,0) 80%);filter:blur(.7px)"></div><div style="position:absolute;left:31px;top:29px;width:9px;height:8px;background:#fbf7ee;border-radius:50%;filter:blur(.8px)"></div><div style="position:absolute;left:28px;top:27px;width:6px;height:7px;background:#8f9a58;border-radius:50%;filter:blur(1px);opacity:.8"></div><div style="position:absolute;left:40px;top:33px;width:6px;height:7px;background:#9aa566;border-radius:50%;filter:blur(1px);opacity:.8"></div><div style="position:absolute;left:38px;top:44px;width:7px;height:5px;background:#3f6a3a;border-radius:30%;filter:blur(.7px)"></div><div style="position:absolute;left:29px;top:39px;width:7px;height:7px;background:#c2a061;border-radius:40%;filter:blur(.9px)"></div><div style="position:absolute;left:34px;top:46px;width:6px;height:5px;background:#d8c9a0;border-radius:40%;filter:blur(.8px)"></div><div style="position:absolute;left:59px;top:26px;width:14px;height:18px;background:#2b2830;border-radius:35% 35% 20% 20%;filter:blur(.3px)"></div><div style="position:absolute;left:62px;top:24.5px;width:7px;height:5px;background:#3a3640;border-radius:50%"></div><div style="position:absolute;left:52.5px;top:36px;width:4.5px;height:8.5px;background:#efe3d8;border-radius:1px"></div><div style="position:absolute;left:57.5px;top:37px;width:3.5px;height:7.5px;background:#f3ece4;border-radius:1px"></div><div style="position:absolute;left:60.5px;top:45px;width:8px;height:4.5px;background:#e9a79a;border-radius:50%"></div><div style="position:absolute;left:67px;top:44.5px;width:7.5px;height:5px;background:#f1eadf;transform:rotate(15deg)"></div><div style="position:absolute;left:68.5px;top:33px;width:3px;height:7px;background:#c99863;transform:rotate(20deg);border-radius:1px"></div><div style="position:absolute;left:78px;top:24px;width:17px;height:13px;background:radial-gradient(ellipse,#ffffff 25%,#eceee6 55%,rgba(255,255,255,0) 78%);filter:blur(.5px)"></div><div style="position:absolute;left:84px;top:28px;width:4px;height:3px;background:#dcdfcf;border-radius:50%;filter:blur(.6px)"></div><div style="position:absolute;left:96px;top:23px;width:17px;height:16px;background:radial-gradient(ellipse,#fdfdf9 25%,#e6e9dd 55%,rgba(255,255,255,0) 78%);filter:blur(.5px)"></div><div style="position:absolute;left:101px;top:27px;width:5px;height:4px;background:#d5dac3;border-radius:50%;filter:blur(.7px)"></div><div style="position:absolute;left:84px;top:33px;width:15px;height:4.5px;background:#4f7a33;border-radius:60% 40% 60% 40%;transform:rotate(-22deg)"></div><div style="position:absolute;left:89px;top:36px;width:4.5px;height:16px;background:#5b8a3a;border-radius:50%;transform:rotate(12deg)"></div><div style="position:absolute;left:99px;top:38px;width:12px;height:4px;background:#5f8f3f;border-radius:50%;transform:rotate(-30deg)"></div><div style="position:absolute;left:96px;top:44px;width:6px;height:3px;background:#6c9a48;border-radius:50%;transform:rotate(30deg)"></div><div style="position:absolute;left:104px;top:51.5px;width:8px;height:1.8px;background:#222;border-radius:1px"></div><div style="position:absolute;left:27px;top:56px;width:86px;height:3.3px;background:linear-gradient(180deg,#e9e9e9,#cfcfcf);"></div><div style="position:absolute;left:29px;top:57.2px;width:6px;height:1px;background:#555;"></div><div style="position:absolute;left:27px;top:59.3px;width:86px;height:35.7px;background:#ffffff;"></div><div style="position:absolute;left:33px;top:60.5px;width:16px;height:16px;background:#fdfdfd;outline:0.3px solid #ececec"></div><div style="position:absolute;left:53px;top:60.5px;width:16px;height:16px;background:#fdfdfd;outline:0.3px solid #ececec"></div><div style="position:absolute;left:73px;top:60.5px;width:16px;height:16px;background:#fdfdfd;outline:0.3px solid #ececec"></div><div style="position:absolute;left:93px;top:60.5px;width:16px;height:16px;background:#fdfdfd;outline:0.3px solid #ececec"></div><div style="position:absolute;left:36.5px;top:64.5px;width:1.8px;height:9.5px;background:#8e4fa0;"></div><div style="position:absolute;left:39.5px;top:64.5px;width:1.8px;height:9.5px;background:#62a852;"></div><div style="position:absolute;left:42.5px;top:64.5px;width:1.8px;height:9.5px;background:#d64a5a;"></div><div style="position:absolute;left:36.5px;top:71px;width:8px;height:3px;background:#e7e7e7;"></div><div style="position:absolute;left:55px;top:66px;width:12px;height:6px;background:#eef0e4;transform:rotate(-10deg);border-radius:1px"></div><div style="position:absolute;left:58px;top:67.5px;width:5px;height:2px;background:#e58aa0;transform:rotate(-10deg)"></div><div style="position:absolute;left:75px;top:68px;width:12px;height:6.5px;background:#f2cb2e;border-radius:1px"></div><div style="position:absolute;left:77.5px;top:63.5px;width:7px;height:5.5px;background:#f7f7f2;border-radius:40% 40% 0 0"></div><div style="position:absolute;left:97px;top:64px;width:4px;height:9px;background:#f4da4e;border-radius:1px"></div><div style="position:absolute;left:101.5px;top:63.5px;width:4px;height:9.5px;background:#f6e06a;border-radius:1px"></div><div style="position:absolute;left:97.5px;top:67px;width:7.5px;height:2px;background:#e58a5a;"></div><div style="position:absolute;left:38px;top:79px;width:4px;height:0.9px;background:#8a8a8a;"></div><div style="position:absolute;left:55px;top:79px;width:11px;height:0.9px;background:#8a8a8a;"></div><div style="position:absolute;left:77px;top:79px;width:7px;height:0.9px;background:#8a8a8a;"></div><div style="position:absolute;left:94px;top:79px;width:13px;height:0.9px;background:#8a8a8a;"></div><div style="position:absolute;left:34px;top:85.5px;width:13px;height:7.5px;background:#d9dcd3;border-radius:1.500px"></div><div style="position:absolute;left:40px;top:84.5px;width:8px;height:8px;background:#e9e4d2;border-radius:1px"></div><div style="position:absolute;left:55px;top:83px;width:11px;height:12px;background:linear-gradient(135deg,#8c5a66,#e3cdd3 40%,#7a4a58 70%,#d9c3c9);filter:blur(.6px)"></div><div style="position:absolute;left:76px;top:82.5px;width:10px;height:12.5px;background:#e7a3b6;border-radius:1px"></div><div style="position:absolute;left:78.5px;top:86px;width:5px;height:6px;background:#f6e5ea;border-radius:50%"></div><div style="position:absolute;left:95px;top:83px;width:11px;height:12px;background:linear-gradient(135deg,#5a3830,#d8c7be 40%,#6b4038 70%,#cdb9ae);filter:blur(.6px)"></div></div><!--e4-->
<div class="th" id="th5" style="left:507px;top:127px"><div style="position:absolute;left:0px;top:0px;width:113px;height:76px;background:#ececec;"></div><div style="position:absolute;left:0px;top:0px;width:113px;height:12px;background:linear-gradient(100deg,#e6e6e6 0%,#f4f4f4 50%,#e2e2e2 55%,#ededed 100%);"></div><div style="position:absolute;left:4.8px;top:2.3px;font-size:5px;line-height:6px;color:#262626;white-space:nowrap;font-family:'Liberation Sans',sans-serif;transform:scaleX(.81);transform-origin:left top">Electromechanical</div><div style="position:absolute;left:99px;top:1px;width:8px;height:0.8px;background:#8a8a8a;"></div><div style="position:absolute;left:109px;top:1px;width:4px;height:0.8px;background:#8a8a8a;"></div><div style="position:absolute;left:77px;top:5.8px;width:33px;height:3.3px;background:#fcfcfc;border-radius:1.500px;outline:0.3px solid #d2d2d2"></div><div style="position:absolute;left:80px;top:7px;width:7px;height:0.9px;background:#aaa;"></div><div style="position:absolute;left:109px;top:5.8px;width:4px;height:3.3px;background:#333;"></div><div style="position:absolute;left:4px;top:11.8px;width:109px;height:4.2px;background:linear-gradient(180deg,#5a5a5a,#333);border-radius:1.500px 0 0 1.500px"></div><div style="position:absolute;left:12px;top:13.4px;width:5px;height:1px;background:#d8d8d8;"></div><div style="position:absolute;left:30px;top:13.4px;width:5px;height:1px;background:#d8d8d8;"></div><div style="position:absolute;left:49px;top:13.4px;width:5px;height:1px;background:#d8d8d8;"></div><div style="position:absolute;left:68px;top:13.4px;width:5px;height:1px;background:#d8d8d8;"></div><div style="position:absolute;left:87px;top:13.4px;width:5px;height:1px;background:#d8d8d8;"></div><div style="position:absolute;left:104px;top:13.4px;width:5px;height:1px;background:#d8d8d8;"></div><div style="position:absolute;left:4px;top:17.8px;width:109px;height:23.7px;background:linear-gradient(180deg,#e8a21a 0%,#f6c21f 30%,#f3b417 55%,#c8780c 80%,#7a3e06 100%);"></div><div style="position:absolute;left:4px;top:17.8px;width:109px;height:23.7px;background:radial-gradient(ellipse 45% 60% at 35% 35%,rgba(255,236,110,.85),rgba(255,236,110,0));"></div><div style="position:absolute;left:13px;top:24.5px;width:1.2px;height:17px;background:#3a1e05;"></div><div style="position:absolute;left:53px;top:20.5px;width:1.3px;height:21px;background:#3a1e05;"></div><div style="position:absolute;left:90px;top:23.5px;width:1.1px;height:18px;background:#3a1e05;"></div><div style="position:absolute;left:107px;top:21.5px;width:1px;height:20px;background:#3a1e05;"></div><div style="position:absolute;left:8px;top:26px;width:14px;height:0.9px;background:#4a2707;"></div><div style="position:absolute;left:10px;top:29px;width:10px;height:0.8px;background:#4a2707;"></div><div style="position:absolute;left:46px;top:22px;width:16px;height:0.9px;background:#4a2707;"></div><div style="position:absolute;left:48px;top:25px;width:12px;height:0.8px;background:#4a2707;"></div><div style="position:absolute;left:84px;top:25px;width:13px;height:0.9px;background:#4a2707;"></div><div style="position:absolute;left:86px;top:28px;width:9px;height:0.8px;background:#4a2707;"></div><div style="position:absolute;left:101px;top:23px;width:12px;height:0.9px;background:#4a2707;"></div><div style="position:absolute;left:103px;top:26px;width:8px;height:0.8px;background:#4a2707;"></div><div style="position:absolute;left:4px;top:28.5px;width:109px;height:0.9px;background:#4a2707;transform:rotate(-3.5deg)"></div><div style="position:absolute;left:4px;top:31.5px;width:109px;height:0.8px;background:#5a3008;transform:rotate(-2.5deg)"></div><div style="position:absolute;left:4px;top:34px;width:109px;height:7.5px;background:repeating-linear-gradient(90deg,rgba(60,28,4,.85) 0,rgba(60,28,4,.85) 1px,rgba(60,28,4,.15) 1px,rgba(60,28,4,.15) 4px);"></div><div style="position:absolute;left:4px;top:36px;width:109px;height:0.9px;background:#3a1c04;"></div><div style="position:absolute;left:4px;top:39.5px;width:109px;height:2px;background:#4a2606;"></div><div style="position:absolute;left:111px;top:37.5px;width:1.8px;height:1.8px;background:#2fd04a;border-radius:50%"></div><div style="position:absolute;left:6px;top:45.5px;width:25px;height:3.2px;background:#333;border-radius:.8px"></div><div style="position:absolute;left:7px;top:46.3px;width:2px;height:1.6px;background:#b0201c;"></div><div style="position:absolute;left:10.5px;top:46.6px;width:4.5px;height:1px;background:#ddd;"></div><div style="position:absolute;left:8px;top:51.3px;width:0.8px;height:0.8px;background:#888;"></div><div style="position:absolute;left:9.5px;top:51.2px;width:10px;height:1px;background:#555;"></div><div style="position:absolute;left:8px;top:54.699999999999996px;width:0.8px;height:0.8px;background:#888;"></div><div style="position:absolute;left:9.5px;top:54.6px;width:9px;height:1px;background:#555;"></div><div style="position:absolute;left:8px;top:58.099999999999994px;width:0.8px;height:0.8px;background:#888;"></div><div style="position:absolute;left:9.5px;top:58.0px;width:13px;height:1px;background:#555;"></div><div style="position:absolute;left:8px;top:61.5px;width:0.8px;height:0.8px;background:#888;"></div><div style="position:absolute;left:9.5px;top:61.400000000000006px;width:11px;height:1px;background:#555;"></div><div style="position:absolute;left:8px;top:64.89999999999999px;width:0.8px;height:0.8px;background:#888;"></div><div style="position:absolute;left:9.5px;top:64.8px;width:14px;height:1px;background:#555;"></div><div style="position:absolute;left:8px;top:68.3px;width:0.8px;height:0.8px;background:#888;"></div><div style="position:absolute;left:9.5px;top:68.2px;width:11px;height:1px;background:#555;"></div><div style="position:absolute;left:8px;top:71.69999999999999px;width:0.8px;height:0.8px;background:#888;"></div><div style="position:absolute;left:9.5px;top:71.6px;width:14px;height:1px;background:#555;"></div><div style="position:absolute;left:8px;top:75.1px;width:0.8px;height:0.8px;background:#888;"></div><div style="position:absolute;left:9.5px;top:75.0px;width:11px;height:1px;background:#555;"></div><div style="position:absolute;left:34px;top:46.3px;width:17px;height:1px;background:#999;"></div><div style="position:absolute;left:34px;top:49.3px;width:79px;height:3.5px;background:linear-gradient(180deg,#f0f0f0,#d6d6d6);border-bottom:0.4px solid #c98a84"></div><div style="position:absolute;left:36px;top:50.5px;width:6px;height:1px;background:#666;"></div><div style="position:absolute;left:34px;top:53.3px;width:79px;height:22.7px;background:#fdfdfd;"></div><div style="position:absolute;left:36px;top:54.5px;width:17.5px;height:17px;background:#ffffff;outline:0.3px solid #e3e3e3"></div><div style="position:absolute;left:55.5px;top:54.5px;width:17.5px;height:17px;background:#ffffff;outline:0.3px solid #e3e3e3"></div><div style="position:absolute;left:75px;top:54.5px;width:17.5px;height:17px;background:#ffffff;outline:0.3px solid #e3e3e3"></div><div style="position:absolute;left:94.5px;top:54.5px;width:17.5px;height:17px;background:#ffffff;outline:0.3px solid #e3e3e3"></div><div style="position:absolute;left:38px;top:64.5px;width:13px;height:5px;background:#2c2c2c;transform:skewX(-25deg);border-radius:.5px"></div><div style="position:absolute;left:41px;top:58.5px;width:9px;height:7px;background:#d9d9d9;border-radius:1px"></div><div style="position:absolute;left:44px;top:57.5px;width:2.5px;height:8px;background:#8a8a8a;"></div><div style="position:absolute;left:58px;top:66px;width:11px;height:3.5px;background:#222;transform:skewX(-20deg)"></div><div style="position:absolute;left:63px;top:57.5px;width:3.5px;height:10px;background:#2a2f3a;"></div><div style="position:absolute;left:59px;top:62px;width:6px;height:4px;background:#bfc3c7;"></div><div style="position:absolute;left:76.5px;top:63px;width:14px;height:5px;background:#3a3a3a;transform:skewX(-30deg)"></div><div style="position:absolute;left:82px;top:59.5px;width:6px;height:5px;background:#dcdcdc;"></div><div style="position:absolute;left:78px;top:62.5px;width:6px;height:3px;background:#f0f0f0;"></div><div style="position:absolute;left:96px;top:58.5px;width:9px;height:10.5px;background:#e4e6e8;border-radius:1px"></div><div style="position:absolute;left:105px;top:60px;width:5px;height:8.5px;background:#8d9399;"></div><div style="position:absolute;left:95.5px;top:68.5px;width:15px;height:1.5px;background:#26324a;"></div><div style="position:absolute;left:99px;top:60.5px;width:3.5px;height:7px;background:#2b2f36;"></div><div style="position:absolute;left:40px;top:73.3px;width:9px;height:0.9px;background:#777;"></div><div style="position:absolute;left:59px;top:73.3px;width:9px;height:0.9px;background:#777;"></div><div style="position:absolute;left:79px;top:73.3px;width:8px;height:0.9px;background:#777;"></div><div style="position:absolute;left:100px;top:73.3px;width:6px;height:0.9px;background:#777;"></div></div><!--e5-->
<div class="th" id="th6" style="left:629px;top:127px"><div style="position:absolute;left:0px;top:0px;width:113px;height:91px;background:#f4f4f4;"></div><div style="position:absolute;left:0px;top:0px;width:113px;height:10.3px;background:linear-gradient(180deg,#ffffff,#f3f3f3);"></div><div style="position:absolute;left:7px;top:0px;width:32px;height:9.5px;background:#ffffff;"></div><div style="position:absolute;left:10px;top:1px;width:7.3px;height:8px;background:#8cc63f;border-radius:50%"></div><div style="position:absolute;left:12px;top:3px;width:4.5px;height:3.8px;background:#ffffff;border-radius:50%"></div><div style="position:absolute;left:13.5px;top:4.3px;width:5px;height:1.3px;background:#8cc63f;"></div><div style="position:absolute;left:19px;top:-0.5px;font-size:7.6px;line-height:8.6px;color:#3568a2;white-space:nowrap;font-family:'Liberation Serif',serif;letter-spacing:-.3px"><b>young</b></div><div style="position:absolute;left:19.5px;top:6.7px;width:16px;height:1.5px;background:repeating-linear-gradient(90deg,#6a6a6a 0,#6a6a6a 1.6px,rgba(255,255,255,0) 1.6px,rgba(255,255,255,0) 2.3px);"></div><div style="position:absolute;left:92.5px;top:1.6px;width:2px;height:1.3px;background:#d8332a;"></div><div style="position:absolute;left:96px;top:1.8px;width:4px;height:1px;background:#888;"></div><div style="position:absolute;left:102px;top:1.6px;width:2px;height:1.3px;background:#e88;"></div><div style="position:absolute;left:105px;top:1.8px;width:4px;height:1px;background:#888;"></div><div style="position:absolute;left:0px;top:10.2px;width:113px;height:0.8px;background:#7ab648;"></div><div style="position:absolute;left:0px;top:11px;width:113px;height:3.6px;background:linear-gradient(180deg,#4a7db3,#2f6199);"></div><div style="position:absolute;left:10.5px;top:12.3px;width:4px;height:1px;background:#d8e4f0;"></div><div style="position:absolute;left:22px;top:12.3px;width:5px;height:1px;background:#d8e4f0;"></div><div style="position:absolute;left:35px;top:12.3px;width:4.5px;height:1px;background:#d8e4f0;"></div><div style="position:absolute;left:47px;top:12.3px;width:4px;height:1px;background:#d8e4f0;"></div><div style="position:absolute;left:58px;top:12.3px;width:6px;height:1px;background:#d8e4f0;"></div><div style="position:absolute;left:71px;top:12.3px;width:6.5px;height:1px;background:#d8e4f0;"></div><div style="position:absolute;left:0px;top:14.6px;width:113px;height:38.5px;background:#fbfbfb;"></div><div style="position:absolute;left:7px;top:16.5px;width:103px;height:34.5px;background:linear-gradient(180deg,#dfeefa 0%,#eef4f8 35%,#e4e6df 52%,#8fa38c 66%,#4f6f4d 82%,#2c4634 100%);"></div><div style="position:absolute;left:7px;top:16.5px;width:46px;height:17px;background:linear-gradient(180deg,#e4ebf1,#f6f0e4);opacity:.9"></div><div style="position:absolute;left:7px;top:30px;width:38px;height:8px;background:linear-gradient(180deg,#e9dcc6,#c9c3ac);filter:blur(.8px)"></div><div style="position:absolute;left:20px;top:35.5px;width:18px;height:5px;background:#dfe7ee;border-radius:50% 50% 20% 20%;filter:blur(.5px)"></div><div style="position:absolute;left:42px;top:25px;width:6px;height:14px;background:linear-gradient(90deg,#9fbdd6,#5f86ad);border-radius:1.500px 1.500px 0 0"></div><div style="position:absolute;left:50px;top:22px;width:9px;height:17px;background:linear-gradient(90deg,#a9c7df,#6a92b8 60%,#4f769c);border-radius:3px 3px 0 0"></div><div style="position:absolute;left:62px;top:21.5px;width:7px;height:17px;background:linear-gradient(90deg,#c9dcea,#8fb0cc);border-radius:3px 3px 0 0"></div><div style="position:absolute;left:71px;top:16.5px;width:7px;height:25px;background:linear-gradient(90deg,#d7e6f1 0%,#a9c5dc 45%,#3f6288 100%);transform:skewX(-3deg)"></div><div style="position:absolute;left:84px;top:29px;width:10px;height:10px;background:#a9bfd3;opacity:.75;filter:blur(.5px)"></div><div style="position:absolute;left:98px;top:31px;width:9px;height:13px;background:linear-gradient(90deg,#7f9dbb,#4f7196);filter:blur(.3px)"></div><div style="position:absolute;left:40px;top:38px;width:34px;height:3px;background:#b9c3c0;filter:blur(.5px)"></div><div style="position:absolute;left:70px;top:42px;width:38px;height:2px;background:#b9bdb4;transform:rotate(12deg);filter:blur(.4px)"></div><div style="position:absolute;left:7px;top:16.5px;width:103px;height:16px;background:linear-gradient(180deg,rgba(255,255,255,.35),rgba(255,255,255,0));"></div><div style="position:absolute;left:80px;top:24px;width:30px;height:14px;background:#e9eef2;filter:blur(2px);opacity:.55"></div><div style="position:absolute;left:104px;top:49.5px;width:3px;height:1.3px;background:#d8231c;"></div><div style="position:absolute;left:0px;top:53px;width:113px;height:19.5px;background:linear-gradient(180deg,#dedede 0%,#ececec 25%,#f0f0f0 100%);"></div><div style="position:absolute;left:7px;top:56.5px;width:103px;height:13.5px;background:#f9f9f9;outline:0.3px solid #dcdcdc"></div><div style="position:absolute;left:8px;top:57.5px;width:10.5px;height:11px;background:#ffffff;border:0.45px solid #c4e6b8"></div><div style="position:absolute;left:9.5px;top:61px;width:7px;height:4.5px;background:#c9ccce;border-radius:40%"></div><div style="position:absolute;left:20px;top:58.3px;width:7px;height:1px;background:#9bd07f;"></div><div style="position:absolute;left:20px;top:60.3px;width:10px;height:0.8px;background:#aaa;"></div><div style="position:absolute;left:20px;top:62px;width:7px;height:0.8px;background:#bbb;"></div><div style="position:absolute;left:26px;top:64.3px;width:4.5px;height:1.6px;background:#bfe3b0;"></div><div style="position:absolute;left:34px;top:57.5px;width:10.5px;height:11px;background:#ffffff;border:0.45px solid #c4e6b8"></div><div style="position:absolute;left:35.5px;top:61px;width:7px;height:4.5px;background:#c9ccce;border-radius:40%"></div><div style="position:absolute;left:46px;top:58.3px;width:7px;height:1px;background:#9bd07f;"></div><div style="position:absolute;left:46px;top:60.3px;width:10px;height:0.8px;background:#aaa;"></div><div style="position:absolute;left:46px;top:62px;width:7px;height:0.8px;background:#bbb;"></div><div style="position:absolute;left:52px;top:64.3px;width:4.5px;height:1.6px;background:#bfe3b0;"></div><div style="position:absolute;left:59.5px;top:57.5px;width:10.5px;height:11px;background:#ffffff;border:0.45px solid #c4e6b8"></div><div style="position:absolute;left:61.0px;top:61px;width:7px;height:4.5px;background:#c9ccce;border-radius:40%"></div><div style="position:absolute;left:71.5px;top:58.3px;width:7px;height:1px;background:#9bd07f;"></div><div style="position:absolute;left:71.5px;top:60.3px;width:10px;height:0.8px;background:#aaa;"></div><div style="position:absolute;left:71.5px;top:62px;width:7px;height:0.8px;background:#bbb;"></div><div style="position:absolute;left:77.5px;top:64.3px;width:4.5px;height:1.6px;background:#bfe3b0;"></div><div style="position:absolute;left:85px;top:57.5px;width:10.5px;height:11px;background:#ffffff;border:0.45px solid #c4e6b8"></div><div style="position:absolute;left:86.5px;top:61px;width:7px;height:4.5px;background:#5a5d60;border-radius:40%"></div><div style="position:absolute;left:97px;top:58.3px;width:7px;height:1px;background:#9bd07f;"></div><div style="position:absolute;left:97px;top:60.3px;width:10px;height:0.8px;background:#aaa;"></div><div style="position:absolute;left:97px;top:62px;width:7px;height:0.8px;background:#bbb;"></div><div style="position:absolute;left:103px;top:64.3px;width:4.5px;height:1.6px;background:#bfe3b0;"></div><div style="position:absolute;left:0px;top:72.5px;width:113px;height:18.5px;background:#f1f1f1;"></div><div style="position:absolute;left:7.5px;top:73px;width:26px;height:3px;background:linear-gradient(180deg,#3f7fae,#1f5a8a);"></div><div style="position:absolute;left:10px;top:74px;width:10px;height:1px;background:#e6eef5;"></div><div style="position:absolute;left:28px;top:74px;width:3.5px;height:1px;background:#cfe0ee;"></div><div style="position:absolute;left:7.5px;top:76px;width:26px;height:15px;background:#ffffff;"></div><div style="position:absolute;left:9px;top:77.5px;width:10px;height:0.9px;background:#888;"></div><div style="position:absolute;left:9px;top:80px;width:9px;height:0.9px;background:#888;"></div><div style="position:absolute;left:9px;top:82.5px;width:12px;height:0.9px;background:#999;"></div><div style="position:absolute;left:26.5px;top:84.5px;width:7px;height:2.3px;background:#d8336f;"></div><div style="position:absolute;left:9px;top:85.3px;width:3.5px;height:0.9px;background:#999;"></div><div style="position:absolute;left:8.5px;top:88px;width:2.5px;height:2.5px;background:#4fb84a;border-radius:50%"></div><div style="position:absolute;left:12px;top:88.8px;width:6px;height:0.9px;background:#777;"></div><div style="position:absolute;left:36.5px;top:73px;width:36.5px;height:18px;background:#ffffff;"></div><div style="position:absolute;left:75px;top:73px;width:35.5px;height:18px;background:#ffffff;"></div><div style="position:absolute;left:37.5px;top:74px;width:1.5px;height:1.5px;background:#3f7fae;"></div><div style="position:absolute;left:40px;top:74.2px;width:6px;height:1px;background:#6f9fc6;"></div><div style="position:absolute;left:38px;top:76.6px;width:32px;height:0.4px;background:#ddd;"></div><div style="position:absolute;left:38px;top:78.5px;width:32px;height:0.8px;background:#a2a2a2;"></div><div style="position:absolute;left:38px;top:80.4px;width:28px;height:0.8px;background:#a2a2a2;"></div><div style="position:absolute;left:38px;top:82.3px;width:32px;height:0.8px;background:#a2a2a2;"></div><div style="position:absolute;left:38px;top:84.2px;width:20px;height:0.8px;background:#a2a2a2;"></div><div style="position:absolute;left:37.5px;top:88.3px;width:1.5px;height:1.5px;background:#3f7fae;"></div><div style="position:absolute;left:40px;top:88.5px;width:8px;height:1px;background:#6f9fc6;"></div><div style="position:absolute;left:76px;top:74px;width:1.5px;height:1.5px;background:#3f7fae;"></div><div style="position:absolute;left:78.5px;top:74.2px;width:3px;height:1px;background:#6f9fc6;"></div><div style="position:absolute;left:105px;top:74.2px;width:3.5px;height:0.9px;background:#aaa;"></div><div style="position:absolute;left:76px;top:76.5px;width:13.5px;height:9.5px;background:linear-gradient(180deg,#2f4f9a 0%,#7f78a8 35%,#f0a83a 62%,#e8c94a 75%,#3a2a1a 100%);"></div><div style="position:absolute;left:82.3px;top:78px;width:1px;height:7.5px;background:#2a1c12;clip-path:polygon(40% 0,60% 0,100% 100%,0 100%)"></div><div style="position:absolute;left:90.5px;top:77.0px;width:17px;height:0.8px;background:#9a9a9a;"></div><div style="position:absolute;left:90.5px;top:78.95px;width:14px;height:0.8px;background:#9a9a9a;"></div><div style="position:absolute;left:90.5px;top:80.9px;width:17px;height:0.8px;background:#9a9a9a;"></div><div style="position:absolute;left:90.5px;top:82.85px;width:14px;height:0.8px;background:#9a9a9a;"></div><div style="position:absolute;left:90.5px;top:84.8px;width:17px;height:0.8px;background:#9a9a9a;"></div><div style="position:absolute;left:77px;top:86.8px;width:10px;height:0.8px;background:#999;"></div><div style="position:absolute;left:90px;top:86px;width:4px;height:1.5px;background:#bfe3b0;"></div><div style="position:absolute;left:0px;top:90.3px;width:113px;height:0.7px;background:#cfe0ee;"></div></div><!--e6-->
<div class="th" id="th7" style="left:751px;top:127px"><div style="position:absolute;left:0px;top:0px;width:113px;height:83px;background:#4b4b4b;"></div><div style="position:absolute;left:12px;top:0px;width:96px;height:83px;background:#444444;"></div><div style="position:absolute;left:12px;top:0px;width:96px;height:10px;background:#3d3d3d;"></div><div style="position:absolute;left:15.5px;top:1.5px;width:2px;height:2.2px;background:none;border:0.5px solid #9a8460;border-radius:50%"></div><div style="position:absolute;left:19px;top:0.6px;font-size:3.7px;line-height:4.7px;color:#a58f68;white-space:nowrap;font-family:'Liberation Mono',monospace;letter-spacing:-.25px">WEBSITE TEMPLATES</div><div style="position:absolute;left:71px;top:1.8px;width:25px;height:2.6px;background:#6e6e6e;"></div><div style="position:absolute;left:72px;top:2.7px;width:14px;height:0.8px;background:#9a9a9a;"></div><div style="position:absolute;left:96.5px;top:1.8px;width:7.5px;height:2.6px;background:#383838;"></div><div style="position:absolute;left:98px;top:2.1px;width:1.5px;height:1.5px;background:#4a78b0;border-radius:50%"></div><div style="position:absolute;left:100.5px;top:2.7px;width:3px;height:0.8px;background:#aaa;"></div><div style="position:absolute;left:12.5px;top:10px;width:95px;height:3.8px;background:linear-gradient(180deg,#3a3a3a,#262626);"></div><div style="position:absolute;left:18px;top:11.5px;width:5px;height:0.9px;background:#bdbdbd;"></div><div style="position:absolute;left:30px;top:11.5px;width:5px;height:0.9px;background:#bdbdbd;"></div><div style="position:absolute;left:43.5px;top:11.5px;width:5px;height:0.9px;background:#bdbdbd;"></div><div style="position:absolute;left:58px;top:11.5px;width:5px;height:0.9px;background:#bdbdbd;"></div><div style="position:absolute;left:70px;top:11.5px;width:5px;height:0.9px;background:#bdbdbd;"></div><div style="position:absolute;left:86px;top:11.5px;width:5px;height:0.9px;background:#bdbdbd;"></div><div style="position:absolute;left:97.5px;top:11.5px;width:5px;height:0.9px;background:#bdbdbd;"></div><div style="position:absolute;left:26.5px;top:10.3px;width:0.4px;height:3.2px;background:#4a4a4a;"></div><div style="position:absolute;left:39.5px;top:10.3px;width:0.4px;height:3.2px;background:#4a4a4a;"></div><div style="position:absolute;left:54px;top:10.3px;width:0.4px;height:3.2px;background:#4a4a4a;"></div><div style="position:absolute;left:66px;top:10.3px;width:0.4px;height:3.2px;background:#4a4a4a;"></div><div style="position:absolute;left:80.5px;top:10.3px;width:0.4px;height:3.2px;background:#4a4a4a;"></div><div style="position:absolute;left:92.5px;top:10.3px;width:0.4px;height:3.2px;background:#4a4a4a;"></div><div style="position:absolute;left:12.5px;top:13.8px;width:95px;height:25px;background:linear-gradient(180deg,#6b5a48 0%,#8a6a45 40%,#a8752f 70%,#7a4f1f 100%);"></div><div style="position:absolute;left:12.5px;top:13.8px;width:5.5px;height:25px;background:linear-gradient(90deg,#1f1a17,#4a3a30);"></div><div style="position:absolute;left:18px;top:14px;width:13px;height:17px;background:linear-gradient(180deg,#cfcfc9,#a9a9a3);"></div><div style="position:absolute;left:19px;top:22px;width:6px;height:10px;background:#3a3632;filter:blur(.4px)"></div><div style="position:absolute;left:42.5px;top:14px;width:12.5px;height:6px;background:#c9ccc8;"></div><div style="position:absolute;left:55.5px;top:14px;width:25px;height:16px;background:linear-gradient(180deg,#c78a36,#b57a2c);"></div><div style="position:absolute;left:61px;top:14px;width:0.6px;height:8px;background:#e9d9b8;"></div><div style="position:absolute;left:67.5px;top:14px;width:0.6px;height:8px;background:#e9d9b8;"></div><div style="position:absolute;left:74px;top:14px;width:0.6px;height:8px;background:#e9d9b8;"></div><div style="position:absolute;left:81px;top:14px;width:13px;height:12px;background:linear-gradient(180deg,#e0e0da,#c8c8c0);"></div><div style="position:absolute;left:94px;top:14px;width:13.5px;height:14px;background:linear-gradient(180deg,#8e9291,#d2cfc6);"></div><div style="position:absolute;left:31.5px;top:19.5px;width:33px;height:10px;background:linear-gradient(180deg,#c48836,#a86f27);"></div><div style="position:absolute;left:33px;top:24px;width:31px;height:11.5px;background:linear-gradient(180deg,#f4f4f2 0%,#e9e9e7 45%,#bdb8b2 60%,#7a5a3a 80%,#5a3d22 100%);"></div><div style="position:absolute;left:34.5px;top:23.5px;width:11px;height:3.5px;background:#fafafa;border-radius:1px"></div><div style="position:absolute;left:49px;top:23.5px;width:13px;height:3.5px;background:#f6f6f6;border-radius:1px"></div><div style="position:absolute;left:19.5px;top:29.5px;width:12px;height:6.5px;background:#a9722b;"></div><div style="position:absolute;left:66px;top:27.5px;width:9px;height:8.5px;background:#a86f26;"></div><div style="position:absolute;left:69.5px;top:17px;width:1.8px;height:12px;background:#2e2a26;"></div><div style="position:absolute;left:82px;top:26px;width:12px;height:10.5px;background:#c99547;"></div><div style="position:absolute;left:88px;top:19.5px;width:8px;height:5px;background:#3a3836;"></div><div style="position:absolute;left:95px;top:23px;width:9px;height:13px;background:#8a5a22;"></div><div style="position:absolute;left:104px;top:23px;width:3.5px;height:13px;background:#3a2a1e;"></div><div style="position:absolute;left:12.5px;top:35.5px;width:95px;height:3.3px;background:linear-gradient(180deg,#7a5424,#4a3218);"></div><div style="position:absolute;left:12.5px;top:13.8px;width:95px;height:25px;background:linear-gradient(180deg,rgba(20,12,6,.28),rgba(20,12,6,.05) 60%,rgba(20,12,6,.15));"></div><div style="position:absolute;left:12.5px;top:39px;width:20px;height:44px;background:#444444;"></div><div style="position:absolute;left:12.5px;top:39.5px;width:20px;height:3.3px;background:linear-gradient(180deg,#3a3a3a,#2a2a2a);"></div><div style="position:absolute;left:14px;top:40.7px;width:9px;height:0.9px;background:#cfcfcf;"></div><div style="position:absolute;left:12.5px;top:66.5px;width:20px;height:3.3px;background:linear-gradient(180deg,#3a3a3a,#2a2a2a);"></div><div style="position:absolute;left:14px;top:67.7px;width:10px;height:0.9px;background:#cfcfcf;"></div><div style="position:absolute;left:14px;top:72.0px;width:16px;height:0.9px;background:#a5a5a5;"></div><div style="position:absolute;left:14px;top:74.3px;width:11px;height:0.9px;background:#a5a5a5;"></div><div style="position:absolute;left:14px;top:76.6px;width:15px;height:0.9px;background:#a5a5a5;"></div><div style="position:absolute;left:14px;top:78.9px;width:14px;height:0.9px;background:#a5a5a5;"></div><div style="position:absolute;left:14px;top:81.2px;width:12px;height:0.9px;background:#a5a5a5;"></div><div style="position:absolute;left:32.5px;top:39px;width:75px;height:44px;background:#fdfdfd;"></div><div style="position:absolute;left:35px;top:40.3px;width:1.6px;height:1.6px;background:#f0912a;"></div><div style="position:absolute;left:37.5px;top:40.6px;width:8px;height:1px;background:#666;"></div><div style="position:absolute;left:76px;top:40.7px;width:5px;height:0.8px;background:#bbb;"></div><div style="position:absolute;left:34.5px;top:43px;width:47px;height:0.4px;background:#ddd;"></div><div style="position:absolute;left:83px;top:40.3px;width:1.6px;height:1.6px;background:#f0912a;"></div><div style="position:absolute;left:85.5px;top:40.6px;width:5px;height:1px;background:#666;"></div><div style="position:absolute;left:102px;top:40.7px;width:4px;height:0.8px;background:#bbb;"></div><div style="position:absolute;left:83px;top:43px;width:23px;height:0.4px;background:#ddd;"></div><div style="position:absolute;left:36px;top:44.5px;width:12.5px;height:10px;background:linear-gradient(180deg,#e6dccb 0%,#c9b391 45%,#e9e2d4 60%,#a8855a 100%);"></div><div style="position:absolute;left:50px;top:45.0px;width:29px;height:0.85px;background:#a8a8a8;"></div><div style="position:absolute;left:50px;top:47.15px;width:27px;height:0.85px;background:#a8a8a8;"></div><div style="position:absolute;left:50px;top:49.3px;width:29px;height:0.85px;background:#a8a8a8;"></div><div style="position:absolute;left:50px;top:51.45px;width:27px;height:0.85px;background:#a8a8a8;"></div><div style="position:absolute;left:50px;top:53.6px;width:29px;height:0.85px;background:#a8a8a8;"></div><div style="position:absolute;left:36px;top:56.8px;width:44px;height:0.85px;background:#9a9a9a;"></div><div style="position:absolute;left:36px;top:58.949999999999996px;width:38px;height:0.85px;background:#9a9a9a;"></div><div style="position:absolute;left:36px;top:61.099999999999994px;width:32px;height:0.85px;background:#9a9a9a;"></div><div style="position:absolute;left:84px;top:45.3px;width:17.0px;height:0.9px;background:#6a6a6a;"></div><div style="position:absolute;left:84px;top:47.72px;width:18.5px;height:0.9px;background:#b2b2b2;"></div><div style="position:absolute;left:84px;top:50.14px;width:20.0px;height:0.9px;background:#6a6a6a;"></div><div style="position:absolute;left:84px;top:52.559999999999995px;width:17.0px;height:0.9px;background:#b2b2b2;"></div><div style="position:absolute;left:84px;top:54.98px;width:18.5px;height:0.9px;background:#6a6a6a;"></div><div style="position:absolute;left:84px;top:57.4px;width:20.0px;height:0.9px;background:#b2b2b2;"></div><div style="position:absolute;left:84px;top:59.81999999999999px;width:17.0px;height:0.9px;background:#6a6a6a;"></div><div style="position:absolute;left:35px;top:66.3px;width:1.6px;height:1.6px;background:#f0912a;"></div><div style="position:absolute;left:37.5px;top:66.6px;width:10px;height:1px;background:#666;"></div><div style="position:absolute;left:101.5px;top:66.7px;width:4px;height:0.8px;background:#bbb;"></div><div style="position:absolute;left:34.5px;top:69px;width:72px;height:0.4px;background:#ddd;"></div><div style="position:absolute;left:35.5px;top:70.5px;width:13.5px;height:10px;background:linear-gradient(180deg,#cfc9bd,#efe9dc 50%,#b5a78e);"></div><div style="position:absolute;left:37.5px;top:81.5px;width:9px;height:0.8px;background:#8fb3d9;"></div><div style="position:absolute;left:49.5px;top:70.5px;width:13.5px;height:10px;background:linear-gradient(180deg,#7a8288,#e9e6dd 45%,#4a4a48);"></div><div style="position:absolute;left:51.5px;top:81.5px;width:9px;height:0.8px;background:#8fb3d9;"></div><div style="position:absolute;left:63.5px;top:70.5px;width:13.5px;height:10px;background:linear-gradient(180deg,#a8834f,#e6d9bf 50%,#8a6a3a);"></div><div style="position:absolute;left:65.5px;top:81.5px;width:9px;height:0.8px;background:#8fb3d9;"></div><div style="position:absolute;left:77.5px;top:70.5px;width:13.5px;height:10px;background:linear-gradient(180deg,#b9b5ad,#f1efe9 50%,#8e8a82);"></div><div style="position:absolute;left:79.5px;top:81.5px;width:9px;height:0.8px;background:#8fb3d9;"></div><div style="position:absolute;left:91.5px;top:70.5px;width:13.5px;height:10px;background:linear-gradient(180deg,#d2cdc2,#efeadf 50%,#b9ae98);"></div><div style="position:absolute;left:93.5px;top:81.5px;width:9px;height:0.8px;background:#8fb3d9;"></div><div style="position:absolute;left:77px;top:77px;width:36px;height:36px;background:#1a96f8;clip-path:polygon(100% 0,100% 100%,0 100%)"></div><svg style="position:absolute;left:94px;top:94px" width="18" height="16" viewBox="0 0 18 16"><path d="M2 8 L7 13 L16 2.500" fill="none" stroke="#fff" stroke-width="1.800"/></svg></div><!--e7-->
<div class="th" id="th8" style="left:19px;top:249px"><div style="position:absolute;left:0px;top:0px;width:113px;height:96px;background:#030303;"></div><div style="position:absolute;left:0px;top:8px;width:113px;height:16px;background:linear-gradient(180deg,rgba(60,5,8,0) 0%,#30040600 5%,#2e0406 60%,#50070b 100%);"></div><div style="position:absolute;left:0px;top:24px;width:9px;height:72px;background:#030303;"></div><div style="position:absolute;left:110px;top:24px;width:3px;height:72px;background:#030303;"></div><div style="position:absolute;left:11.5px;top:3.7px;font-size:6.2px;line-height:7.2px;color:#f2f2f2;white-space:nowrap;font-family:'Liberation Serif',serif;letter-spacing:-.25px"><b><span style="color:#c4161c">F</span>ASHION LIFT</b></div><div style="position:absolute;left:63px;top:6.2px;width:34.5px;height:3.8px;background:#7c7c7c;"></div><div style="position:absolute;left:65px;top:7.6px;width:17px;height:0.9px;background:#b5b5b5;"></div><div style="position:absolute;left:97.5px;top:6.2px;width:10.5px;height:3.8px;background:linear-gradient(180deg,#c4161c,#8a0d12);"></div><div style="position:absolute;left:100px;top:7.6px;width:5.5px;height:0.9px;background:#f0c9c9;"></div><div style="position:absolute;left:10.5px;top:17px;width:14px;height:6.5px;background:linear-gradient(180deg,#c4161c,#8a0d12);border-radius:1.500px 1.500px 0 0"></div><div style="position:absolute;left:25px;top:17px;width:13.5px;height:6.5px;background:linear-gradient(180deg,#4c4c4c,#2a2a2a);border-radius:1.500px 1.500px 0 0"></div><div style="position:absolute;left:39px;top:17px;width:13.5px;height:6.5px;background:linear-gradient(180deg,#4c4c4c,#2a2a2a);border-radius:1.500px 1.500px 0 0"></div><div style="position:absolute;left:53px;top:17px;width:13.5px;height:6.5px;background:linear-gradient(180deg,#4c4c4c,#2a2a2a);border-radius:1.500px 1.500px 0 0"></div><div style="position:absolute;left:67px;top:17px;width:13.5px;height:6.5px;background:linear-gradient(180deg,#4c4c4c,#2a2a2a);border-radius:1.500px 1.500px 0 0"></div><div style="position:absolute;left:81px;top:17px;width:13.5px;height:6.5px;background:linear-gradient(180deg,#4c4c4c,#2a2a2a);border-radius:1.500px 1.500px 0 0"></div><div style="position:absolute;left:95px;top:17px;width:13.5px;height:6.5px;background:linear-gradient(180deg,#4c4c4c,#2a2a2a);border-radius:1.500px 1.500px 0 0"></div><div style="position:absolute;left:15.0px;top:19.8px;width:5px;height:1px;background:#bdbdbd;"></div><div style="position:absolute;left:28.0px;top:19.8px;width:7px;height:1px;background:#bdbdbd;"></div><div style="position:absolute;left:41.5px;top:19.8px;width:8px;height:1px;background:#bdbdbd;"></div><div style="position:absolute;left:57.0px;top:19.8px;width:5px;height:1px;background:#bdbdbd;"></div><div style="position:absolute;left:69.0px;top:19.8px;width:9px;height:1px;background:#bdbdbd;"></div><div style="position:absolute;left:85.5px;top:19.8px;width:4px;height:1px;background:#bdbdbd;"></div><div style="position:absolute;left:97.0px;top:19.8px;width:9px;height:1px;background:#bdbdbd;"></div><div style="position:absolute;left:9px;top:24px;width:101px;height:32.5px;background:linear-gradient(90deg,#c2c2c2 0%,#d2d2d2 45%,#d6d6d6 100%);"></div><div style="position:absolute;left:25px;top:26px;width:17px;height:16px;background:radial-gradient(ellipse at 50% 45%,#4a3226 0%,#6a4c3a 45%,#7a6252 70%,rgba(120,100,85,0) 100%);border-radius:50%"></div><div style="position:absolute;left:32px;top:30.5px;width:5.5px;height:7.5px;background:#e0bfa8;border-radius:45%;filter:blur(.3px)"></div><div style="position:absolute;left:30px;top:28.5px;width:8px;height:4.5px;background:#3a241a;border-radius:50% 50% 30% 30%;filter:blur(.3px)"></div><div style="position:absolute;left:30px;top:38px;width:7px;height:5px;background:#141414;border-radius:30%"></div><div style="position:absolute;left:13px;top:36px;width:12px;height:8px;background:#a8988f;border-radius:40%;transform:rotate(-25deg)"></div><div style="position:absolute;left:19.5px;top:33.5px;width:4.5px;height:3px;background:#1c1c1c;transform:rotate(-30deg)"></div><div style="position:absolute;left:41px;top:37.5px;width:11px;height:9px;background:#b5a8a0;border-radius:40%;transform:rotate(20deg)"></div><div style="position:absolute;left:42.5px;top:36px;width:4.5px;height:3px;background:#1c1c1c;transform:rotate(25deg)"></div><div style="position:absolute;left:44.5px;top:39px;width:5px;height:7px;background:#e6e0de;border-radius:30%;transform:rotate(15deg)"></div><div style="position:absolute;left:22px;top:40px;width:22px;height:16.5px;background:linear-gradient(180deg,#9c8c84,#b3a49c 50%,#a89890);border-radius:30% 30% 0 0"></div><div style="position:absolute;left:27.5px;top:38.5px;width:4px;height:10px;background:#6e5444;border-radius:40%;transform:rotate(-12deg);filter:blur(.4px)"></div><div style="position:absolute;left:35px;top:38.5px;width:4px;height:9px;background:#6e5444;border-radius:40%;transform:rotate(14deg);filter:blur(.4px)"></div><div style="position:absolute;left:23px;top:52.3px;width:20px;height:1.6px;background:#cfc2bb;"></div><div style="position:absolute;left:60px;top:31.2px;font-size:6px;line-height:7px;color:#b5242b;white-space:nowrap;font-family:'Liberation Serif',serif;letter-spacing:-.2px"><b>FASHION LIFT</b></div><div style="position:absolute;left:74.5px;top:38.6px;font-size:5.8px;line-height:6.8px;color:#f4f4f4;white-space:nowrap;font-family:'Liberation Serif',serif;letter-spacing:-.2px"><b>WITH US</b></div><div style="position:absolute;left:9px;top:56.5px;width:101px;height:24.5px;background:#1d1d1d;"></div><div style="position:absolute;left:9px;top:56.5px;width:101px;height:1px;background:#4a4a4a;"></div><div style="position:absolute;left:73px;top:56.5px;width:12.5px;height:1.2px;background:#a01016;"></div><div style="position:absolute;left:11.5px;top:61px;width:22px;height:1.3px;background:#c4c4c4;"></div><div style="position:absolute;left:11.5px;top:64.8px;width:38px;height:0.8px;background:#5c5c5c;"></div><div style="position:absolute;left:11.5px;top:66.78px;width:37px;height:0.8px;background:#5c5c5c;"></div><div style="position:absolute;left:11.5px;top:68.75999999999999px;width:38px;height:0.8px;background:#5c5c5c;"></div><div style="position:absolute;left:11.5px;top:70.74px;width:37px;height:0.8px;background:#5c5c5c;"></div><div style="position:absolute;left:11.5px;top:72.72px;width:36px;height:0.8px;background:#5c5c5c;"></div><div style="position:absolute;left:11.5px;top:74.7px;width:38px;height:0.8px;background:#5c5c5c;"></div><div style="position:absolute;left:11.5px;top:76.67999999999999px;width:32px;height:0.8px;background:#5c5c5c;"></div><div style="position:absolute;left:56px;top:59.5px;width:15.5px;height:20px;background:#c2c2c2;outline:0.4px solid #5a5a5a"></div><div style="position:absolute;left:59px;top:61px;width:9.5px;height:9px;background:radial-gradient(ellipse,#4a3226 0%,#6a4c3a 55%,rgba(122,98,82,0) 100%);border-radius:50%"></div><div style="position:absolute;left:62.2px;top:63.5px;width:3.5px;height:4.5px;background:#e3c3ad;border-radius:45%"></div><div style="position:absolute;left:58.5px;top:69px;width:10.5px;height:10.5px;background:#a2928a;border-radius:30% 30% 0 0"></div><div style="position:absolute;left:66.5px;top:66px;width:3.5px;height:4.5px;background:#ddd6d3;border-radius:30%"></div><div style="position:absolute;left:62.5px;top:68px;width:3px;height:2.5px;background:#181818;"></div><div style="position:absolute;left:73px;top:59.5px;width:15.5px;height:20px;background:#c2c2c2;outline:0.4px solid #5a5a5a"></div><div style="position:absolute;left:76px;top:61px;width:9.5px;height:9px;background:radial-gradient(ellipse,#4a3226 0%,#6a4c3a 55%,rgba(122,98,82,0) 100%);border-radius:50%"></div><div style="position:absolute;left:79.2px;top:63.5px;width:3.5px;height:4.5px;background:#e3c3ad;border-radius:45%"></div><div style="position:absolute;left:75.5px;top:69px;width:10.5px;height:10.5px;background:#a2928a;border-radius:30% 30% 0 0"></div><div style="position:absolute;left:83.5px;top:66px;width:3.5px;height:4.5px;background:#ddd6d3;border-radius:30%"></div><div style="position:absolute;left:79.5px;top:68px;width:3px;height:2.5px;background:#181818;"></div><div style="position:absolute;left:90px;top:59.5px;width:15.5px;height:20px;background:#c2c2c2;outline:0.4px solid #5a5a5a"></div><div style="position:absolute;left:93px;top:61px;width:9.5px;height:9px;background:radial-gradient(ellipse,#4a3226 0%,#6a4c3a 55%,rgba(122,98,82,0) 100%);border-radius:50%"></div><div style="position:absolute;left:96.2px;top:63.5px;width:3.5px;height:4.5px;background:#e3c3ad;border-radius:45%"></div><div style="position:absolute;left:92.5px;top:69px;width:10.5px;height:10.5px;background:#a2928a;border-radius:30% 30% 0 0"></div><div style="position:absolute;left:100.5px;top:66px;width:3.5px;height:4.5px;background:#ddd6d3;border-radius:30%"></div><div style="position:absolute;left:96.5px;top:68px;width:3px;height:2.5px;background:#181818;"></div><div style="position:absolute;left:9px;top:81px;width:101px;height:12px;background:linear-gradient(180deg,#5a070b 0%,#3a0406 50%,#120102 100%);"></div><div style="position:absolute;left:36px;top:85.5px;width:44px;height:0.9px;background:repeating-linear-gradient(90deg,#8a5a5c 0,#8a5a5c 5px,rgba(0,0,0,0) 5px,rgba(0,0,0,0) 7px);"></div><div style="position:absolute;left:43px;top:89.8px;width:32px;height:0.9px;background:#8c8c8c;"></div></div><!--e8-->
<div class="ln" style="left:10px;top:394px;width:20px"></div>
<div class="ln" style="left:130px;top:394px;width:806px"></div>
<div class="t" style="left:40px;top:380px;font-size:20px;line-height:30px;color:#333">版块管理</div>
<div class="abs" style="left:10px;top:428px;width:927px;height:68px;background:#f2f2f2;border-left:5px solid #169587"></div>
<div class="t" style="left:30px;top:450px;font-size:16px;line-height:24px;color:#222">如果想更直观的进行各个位置版块的数据编辑，请进入</div>
<div class="btn" style="left:414px;top:443px;width:106px;text-align:center">可视化编辑</div>
<div class="ln" style="left:10px;top:546px;width:927px"></div>
<div class="abs" style="left:10px;top:506px;width:85px;height:41px;border:1px solid #e6e6e6;border-bottom-color:#fff;border-radius:2px 2px 0 0;background:#fff"></div>
<div class="tab" style="left:24px">公共版块</div>
<div class="tab" style="left:105px">资讯详细页版块</div>
<div class="tab" style="left:223px">产品详细页版块</div>
<div class="tab" style="left:341px">首页内版块</div>
<div class="tab" style="left:431px">资讯列表页版块</div>
<div class="tab" style="left:549px">产品列表页版块</div>
<div class="tab" style="left:667px">单页内版块</div>
<div class="abs" style="left:20px;top:567px;width:906px;height:40px;background:#f2f2f2"></div>
<div class="ln" style="left:20px;top:567px;width:906px"></div>
<div class="ln" style="left:20px;top:606px;width:906px"></div>
<div class="ln" style="left:20px;top:655px;width:906px"></div>
<div class="ln" style="left:20px;top:704px;width:906px"></div>
<div class="ln" style="left:20px;top:753px;width:906px"></div>
<div class="vl" style="left:20px;top:567px;height:240px"></div>
<div class="vl" style="left:194px;top:567px;height:240px"></div>
<div class="vl" style="left:396px;top:567px;height:240px"></div>
<div class="vl" style="left:671px;top:567px;height:240px"></div>
<div class="vl" style="left:845px;top:567px;height:240px"></div>
<div class="vl" style="left:925px;top:567px;height:240px"></div>
<div class="c hd" style="left:36px;top:577px">版块所属</div>
<div class="c hd" style="left:210px;top:577px">版块标识</div>
<div class="c hd" style="left:412px;top:577px">载体形式</div>
<div class="c hd" style="left:686px;top:577px">更新形式</div>
<div class="c hd" style="left:861px;top:577px">操作</div>
<div class="c" style="left:36px;top:621px">公共版块</div>
<div class="c" style="left:210px;top:621px"><span style="letter-spacing:.5px">Logo</span>图片</div>
<div class="c" style="left:412px;top:621px">图片形式&nbsp; 多条</div>
<div class="c" style="left:686px;top:621px">手动更新</div>
<div class="eb" style="top:616px"><svg class="abs" style="left:0;top:0" width="42" height="30" viewBox="0 0 42 30"><path d="M15.100 22.900 L16.500 19 L24.300 11.500 Q25 10.900 25.700 11.500 L26.900 12.700 Q27.400 13.400 26.800 14.100 L19 21.700 Z" fill="#fff"/></svg></div>
<div class="c" style="left:36px;top:670px">公共版块</div>
<div class="c" style="left:210px;top:670px">导航菜单</div>
<div class="c" style="left:412px;top:670px">短文本形式&nbsp; 多条</div>
<div class="c" style="left:686px;top:670px">手动更新</div>
<div class="eb" style="top:665px"><svg class="abs" style="left:0;top:0" width="42" height="30" viewBox="0 0 42 30"><path d="M15.100 22.900 L16.500 19 L24.300 11.500 Q25 10.900 25.700 11.500 L26.900 12.700 Q27.400 13.400 26.800 14.100 L19 21.700 Z" fill="#fff"/></svg></div>
<div class="c" style="left:36px;top:719px">公共版块</div>
<div class="c" style="left:210px;top:719px">首页幻灯片</div>
<div class="c" style="left:412px;top:719px">图片形式&nbsp; 多条</div>
<div class="c" style="left:686px;top:719px">手动更新</div>
<div class="eb" style="top:714px"><svg class="abs" style="left:0;top:0" width="42" height="30" viewBox="0 0 42 30"><path d="M15.100 22.900 L16.500 19 L24.300 11.500 Q25 10.900 25.700 11.500 L26.900 12.700 Q27.400 13.400 26.800 14.100 L19 21.700 Z" fill="#fff"/></svg></div>
<div class="c" style="left:36px;top:768px">公共版块</div>
<div class="c" style="left:210px;top:768px">联系信息</div>
<div class="c" style="left:412px;top:768px">短文本形式&nbsp; 多条</div>
<div class="c" style="left:686px;top:768px">手动更新</div>
<div class="eb" style="top:763px"><svg class="abs" style="left:0;top:0" width="42" height="30" viewBox="0 0 42 30"><path d="M15.100 22.900 L16.500 19 L24.300 11.500 Q25 10.900 25.700 11.500 L26.900 12.700 Q27.400 13.400 26.800 14.100 L19 21.700 Z" fill="#fff"/></svg></div>
</div>

<!-- scrollbar -->
<div class="abs" style="left:1215px;top:59px;width:18px;height:741px;background:#fff"></div>
<div class="abs" style="left:1215px;top:59px;width:1px;height:741px;background:#f3f1e6"></div>
<div class="abs" style="left:1232px;top:59px;width:1px;height:741px;background:#f3f1e6"></div>
<div class="abs" style="left:1217px;top:60px;width:13px;height:14px;border-radius:2px;background:linear-gradient(135deg,#c8d6fb,#b4c8f6);box-shadow:0 0 0 1px #fff,1px 1px 0 1px #9aaeda"></div>
<svg class="abs" style="left:1217px;top:60px" width="14" height="14" viewBox="0 0 14 14"><path d="M3 9 L7 5 L11 9" fill="none" stroke="#4d6185" stroke-width="2.200"/></svg>
<div class="abs" style="left:1217px;top:77px;width:13px;height:730px;border-radius:2px;background:linear-gradient(90deg,#c9d7fb,#c1d2fa 50%,#b3c7f6);box-shadow:0 0 0 1px #fff,1px 1px 0 1px #9aaeda"></div>
<div class="abs" style="left:1221px;top:453px;width:6px;height:7px;background:repeating-linear-gradient(180deg,#eef3ff 0,#eef3ff 1px,#a9bdf0 1px,#a9bdf0 2px)"></div>
<!-- right edge -->
<div class="abs" style="left:1262px;top:0;width:1px;height:800px;background:#ecebe2"></div>
<div class="abs" style="left:1259px;top:238px;width:45px;height:45px;border-radius:50%;background:#0a8a63;border:1px solid #9a9a9a;box-shadow:inset 0 0 0 2px #fff,-1px 3px 7px rgba(0,0,0,.25)"></div>
<!-- fixbar -->
<div class="abs" style="left:1197px;top:687px;width:50px;height:50px;background:#9f9f9f;opacity:.95;border-radius:2px"></div>
<div class="abs" style="left:1197px;top:738px;width:50px;height:50px;background:#9f9f9f;opacity:.95;border-radius:2px"></div>
<svg class="abs" style="left:1207px;top:696px" width="30" height="30" viewBox="0 0 30 30"><path d="M15 2.500 A12 12 0 1 1 13 26.300 L14.800 28.300 L16.600 26.400" fill="none" stroke="#fff" stroke-width="1.400"/><circle cx="15" cy="14.500" r="12" fill="none" stroke="#fff" stroke-width="1.400"/><path d="M10 18 Q15 22 20.500 17.500" fill="none" stroke="#fff" stroke-width="1.400"/></svg>
<svg class="abs" style="left:1207px;top:747px" width="30" height="30" viewBox="0 0 30 30"><path d="M13 26.300 L14.800 28.300 L16.600 26.400" fill="none" stroke="#fff" stroke-width="1.400"/><circle cx="15" cy="14.500" r="12" fill="none" stroke="#fff" stroke-width="1.400"/><path d="M10 18 Q15 22 20.500 17.500" fill="none" stroke="#fff" stroke-width="1.400"/></svg>
</body>
</html>
